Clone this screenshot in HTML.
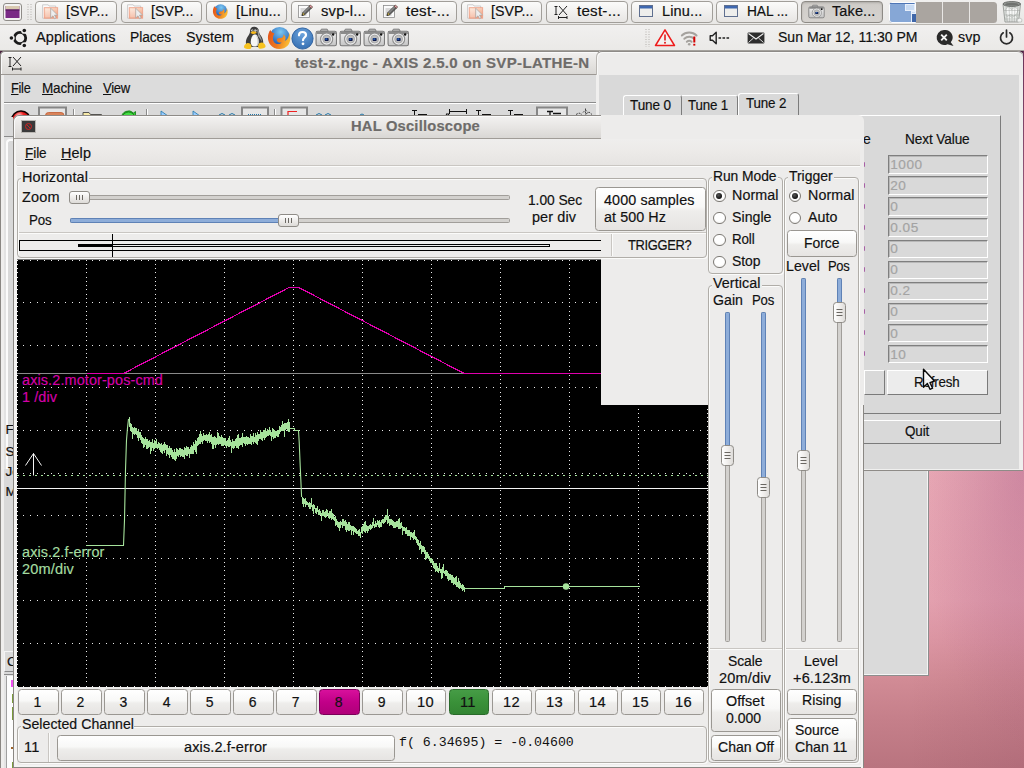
<!DOCTYPE html>
<html><head><meta charset="utf-8"><title>HAL Oscilloscope</title>
<style>
html,body{margin:0;padding:0}html{width:1024px;height:768px;overflow:hidden}
body{width:1024px;height:768px;position:relative;overflow:hidden;background:#c98a98;font-family:"Liberation Sans",sans-serif}
.a{position:absolute;box-sizing:border-box}
.t{position:absolute;white-space:pre;display:block;transform-origin:0 50%;-webkit-text-stroke:0.18px currentColor}
.t u{text-decoration:underline;text-underline-offset:1.2px;text-decoration-thickness:1px}
svg{position:absolute;overflow:visible}
.btn{border:1px solid #9a9792;border-radius:3.5px;background:linear-gradient(#ffffff 0%,#f8f8f7 45%,#eeedeb 55%,#e6e4e2 100%)}
.frame{border:1px solid #b0ada8;border-radius:4px;box-shadow:inset 1px 1px 0 #fbfbfa,1px 1px 0 #fbfbfa}
.radio{border:1px solid #7d7a75;border-radius:50%;background:radial-gradient(circle at 50% 35%,#ffffff 55%,#e2e0dd 100%)}
.tb{border:1px solid #a19e99;border-radius:4px;background:linear-gradient(#fbfbfa,#e7e5e3)}
.ent{border:1px solid;border-color:#7f7f7f #ffffff #ffffff #7f7f7f;background:#d9d9d9;box-shadow:inset 1px 1px 0 #b8b8b8}
</style></head><body>
<div class="a" style="left:0px;top:50px;width:1024px;height:718px;background:#c98a98"></div>
<div class="a" style="left:860px;top:464px;width:164px;height:304px;background:radial-gradient(ellipse 105px 280px at 100% 0%,rgba(150,60,125,.22) 0%,rgba(150,60,125,.10) 50%,rgba(150,60,125,0) 100%),linear-gradient(90deg,rgba(120,50,80,0) 30%,rgba(120,50,80,.11) 100%),linear-gradient(180deg,rgb(235,172,184) 0%,rgb(234,170,182) 4%,rgb(229,162,176) 45%,rgb(221,151,164) 58%,rgb(209,139,149) 71%,rgb(197,127,138) 84%,rgb(185,116,127) 100%)"></div>
<div class="a" style="left:0px;top:50px;width:1024px;height:6px;background:#4a2340"></div>
<div class="a" style="left:862px;top:465px;width:65.5px;height:209.5px;background:#dadada;border-right:1.5px solid #f4f4f4;border-bottom:1.5px solid #f4f4f4;box-shadow:1px 1px 0 #8d8d8d"></div>
<div class="a" style="left:0px;top:51px;width:600px;height:717px;background:#d9d9d9;border-radius:5px 0 0 0"></div>
<div class="a" style="left:0px;top:51px;width:599px;height:24px;background:linear-gradient(#f1f0ef,#e4e2df 60%,#dad8d5);border-radius:5px 0 0 0;border-top:1px solid #8e8b87;border-left:1px solid #8e8b87;border-bottom:1px solid #9c9893;box-shadow:inset 1px 1px 0 #fafafa"></div>
<span class="t" style="left:294.50px;top:56.00px;font:14px/14px 'Liberation Sans',sans-serif;font-weight:bold;letter-spacing:0.291px;transform:scaleX(1.0749);color:#6e6c6a;">test-z.ngc - AXIS 2.5.0 on SVP-LATHE-N</span>
<div class="a" style="left:0px;top:56px;width:1px;height:712px;background:#8a8783"></div>
<div class="a" style="left:1px;top:75px;width:3.5px;height:693px;background:#efeeed"></div>
<div class="a" style="left:4px;top:75px;width:593px;height:28px;background:#dcdcdc;border-bottom:1px solid #8c8c8c;box-shadow:0 1px 0 #fff"></div>
<span class="t" style="left:10.50px;top:81.00px;font:14px/14px 'Liberation Sans',sans-serif;letter-spacing:-0.268px;transform:scaleX(0.9074);color:#111;"><u>F</u>ile</span>
<span class="t" style="left:41.50px;top:81.00px;font:14px/14px 'Liberation Sans',sans-serif;letter-spacing:-0.146px;transform:scaleX(0.9634);color:#111;"><u>M</u>achine</span>
<span class="t" style="left:102.50px;top:81.00px;font:14px/14px 'Liberation Sans',sans-serif;letter-spacing:-0.271px;transform:scaleX(0.9307);color:#111;"><u>V</u>iew</span>
<svg style="left:8px;top:55px" width="16" height="16" viewBox="0 0 16 16"><g stroke="#222" stroke-width="1" fill="none"><path d="M0.5 2.5h3M2 2.5v9M0.5 11.5h3"/><path d="M5 2l8 9M13 2l-8 9"/><path d="M4.5 14h8.5M4.5 12.5v3M13 12.5v3"/></g></svg>
<div class="a" style="left:4px;top:104px;width:593px;height:13px;background:#d9d9d9"></div>
<svg style="left:0;top:103px" width="600" height="13" viewBox="0 103 600 13">
<defs><radialGradient id="rg" cx=".4" cy=".25" r=".7"><stop offset="0" stop-color="#ffd0d0"/><stop offset=".35" stop-color="#e22"/><stop offset="1" stop-color="#a00"/></radialGradient></defs><circle cx="21" cy="120.500" r="9.500" fill="url(#rg)" stroke="#100" stroke-width="1.600"/>
<rect x="39" y="107.500" width="27" height="20" fill="#e6e6e6" stroke="#868686" stroke-width="2"/>
<rect x="45.500" y="112.500" width="18.500" height="10" rx="3" fill="#d9835a" stroke="#c05a30" stroke-width=".8"/>
<path d="M73.500 109v8M146.500 109v8M274.500 109v8" stroke="#8a8a8a"/><path d="M74.500 109v8M147.500 109v8M275.500 109v8" stroke="#fff"/>
<path d="M83 112.500h6l1.500 2h11v4h-18.500z" fill="#f7eaa8" stroke="#444" stroke-width=".9"/>
<path d="M121.500 118a7 7 0 0 1 12-5l2-1.500v5h-5l1.500-1.500a4 4 0 0 0-7 3z" fill="#3c3" stroke="#171" stroke-width=".8"/><circle cx="128.500" cy="118.500" r="6.500" fill="#4d4" stroke="#171" stroke-width=".8"/>
<path d="M161 111l7 5h-7z M193 111l7 5h-7z" fill="#9cf" stroke="#27a" stroke-width=".8"/>
<path d="M219 115q3-3 6 0M229 115q3-3 6 0" stroke="#27a" fill="none"/>
<rect x="242" y="107.500" width="26" height="20" fill="#e6e6e6" stroke="#868686" stroke-width="2"/>
<path d="M248 114.500h14" stroke="#27a" stroke-dasharray="1 1"/>
<rect x="281.500" y="107.500" width="25.500" height="20" fill="#e6e6e6" stroke="#868686" stroke-width="2"/>
<path d="M288 116v-4.500h9" stroke="#e22" fill="none" stroke-width="1.2"/>
<path d="M316 115q3-3 6 0M325 115q3-3 6 0" stroke="#27a" fill="none"/>
<path d="M360 115q2-2 4 0" stroke="#27a" fill="none"/>
<g stroke="#111" fill="none"><path d="M412 110.500h5M414.500 110v7M418 114.500h9" /><path d="M449 111.500h18M449.500 109v5M466.500 109v5M446 114l1.500 2 1.500-2z"/><path d="M476 110.500h5M478.500 110v7M482 114.500h9"/><path d="M508 110.500h5M510.500 110v7M514 114.500h9"/></g>
<rect x="537" y="107.500" width="30" height="20" fill="#e6e6e6" stroke="#868686" stroke-width="2"/>
<path d="M547 111.500h6M550 111v6M553 113.500h8" stroke="#111" fill="none" stroke-width="1.300"/>
<path d="M576 114.500l3-1.500 3 1.500M586 114l3-2 3 2.500M585.500 108.500v7M583 112.500l2.500-2.500 2.500 2.500" stroke="#222" fill="none" stroke-width=".8" stroke-dasharray="2 1"/>
</svg>
<div class="a" style="left:4px;top:117px;width:9px;height:651px;background:#d9d9d9"></div>
<div class="a" style="left:4px;top:136px;width:9px;height:1px;background:#8c8c8c"></div>
<div class="a" style="left:4px;top:137px;width:9px;height:332px;background:#e2e2e2"></div>
<div class="a" style="left:6px;top:139px;width:7px;height:330px;background:#d9d9d9;border-left:2px solid #fbfbfb;border-top:2px solid #fbfbfb;border-radius:4px 0 0 0"></div>
<span class="t" style="left:5.50px;top:423.00px;font:13.5px/13.5px 'Liberation Sans',sans-serif;letter-spacing:0.000px;color:#111;">F</span>
<span class="t" style="left:5.50px;top:445.00px;font:13.5px/13.5px 'Liberation Sans',sans-serif;letter-spacing:0.000px;color:#111;">S</span>
<span class="t" style="left:5.50px;top:465.00px;font:13.5px/13.5px 'Liberation Sans',sans-serif;letter-spacing:0.000px;color:#111;">Jo</span>
<span class="t" style="left:5.50px;top:485.00px;font:13.5px/13.5px 'Liberation Sans',sans-serif;letter-spacing:0.000px;color:#111;">M</span>
<div class="a" style="left:4px;top:651px;width:10px;height:21px;background:#d9d9d9;border:1.500px solid;border-color:#f4f4f4 #8a8a8a #8a8a8a #f4f4f4"></div>
<span class="t" style="left:7.00px;top:655.00px;font:13.5px/13.5px 'Liberation Sans',sans-serif;letter-spacing:0.000px;color:#111;">C</span>
<div class="a" style="left:4px;top:673.5px;width:10px;height:1px;background:#8a8a8a"></div>
<div class="a" style="left:4px;top:674.5px;width:10px;height:94px;background:#e4e4e4"></div>
<div class="a" style="left:5.5px;top:676px;width:1px;height:92px;background:#a0a0a0"></div>
<div class="a" style="left:6.5px;top:676px;width:7px;height:92px;background:#fdfdfd"></div>
<div class="a" style="left:11px;top:680px;width:2px;height:6.5px;background:#f050f0"></div>
<div class="a" style="left:11.5px;top:694px;width:1.2px;height:9px;background:#7a9a3a"></div>
<div class="a" style="left:11.5px;top:707px;width:1.2px;height:13px;background:#7a9a3a"></div>
<div class="a" style="left:11px;top:747px;width:2px;height:1.5px;background:#a0642a"></div>
<div class="a" style="left:11.5px;top:762px;width:1.2px;height:6px;background:#7a9a3a"></div>
<div class="a" style="left:596px;top:51px;width:428px;height:420px;background:#d9d9d9;border-radius:6px 6px 0 0"></div>
<div class="a" style="left:596px;top:51px;width:427px;height:24px;background:#edeceb;border-radius:6px 6px 0 0;border-top:1px solid #8e8b87;border-left:1px solid #b9b6b2;box-shadow:inset 1px 1px 0 #f8f8f7"></div>
<div class="a" style="left:1022.5px;top:51px;width:1.5px;height:420px;background:linear-gradient(#6a3358,#96587a 35%,#bf7d99 70%,#d58fa6)"></div>
<div class="a" style="left:596px;top:75px;width:3px;height:395px;background:#f0efee"></div>
<div class="a" style="left:1019px;top:75px;width:3.5px;height:395px;background:#efeeed"></div>
<div class="a" style="left:596px;top:468.5px;width:427px;height:2px;background:#f0f0ef;border-bottom:1px solid #8e8b87"></div>
<div class="a" style="left:623px;top:95px;width:59px;height:20px;background:#d9d9d9;border:1px solid #fff;border-right:1px solid #7c7c7c;border-bottom:0;border-radius:3px 3px 0 0"></div>
<div class="a" style="left:682px;top:95px;width:56px;height:20px;background:#d9d9d9;border-top:1px solid #fff;border-right:1px solid #7c7c7c;border-radius:0 3px 0 0"></div>
<div class="a" style="left:738px;top:93px;width:60.5px;height:22.5px;background:#d9d9d9;border:1px solid #fff;border-right:1px solid #7c7c7c;border-bottom:0;border-radius:3px 3px 0 0"></div>
<span class="t" style="left:629.90px;top:98.00px;font:14px/14px 'Liberation Sans',sans-serif;letter-spacing:-0.121px;transform:scaleX(0.9683);color:#111;">Tune 0</span>
<span class="t" style="left:688.00px;top:98.00px;font:14px/14px 'Liberation Sans',sans-serif;letter-spacing:-0.179px;transform:scaleX(0.9525);color:#111;">Tune 1</span>
<span class="t" style="left:745.90px;top:96.00px;font:14px/14px 'Liberation Sans',sans-serif;letter-spacing:-0.167px;transform:scaleX(0.9557);color:#111;">Tune 2</span>
<div class="a" style="left:605px;top:114.5px;width:396px;height:299.5px;border:1px solid;border-color:#fff #7c7c7c #7c7c7c #fff"></div>
<span class="t" style="left:904.90px;top:132.00px;font:14px/14px 'Liberation Sans',sans-serif;letter-spacing:-0.100px;transform:scaleX(0.9722);color:#111;">Next Value</span>
<span class="t" style="left:863.00px;top:132.00px;font:14px/14px 'Liberation Sans',sans-serif;letter-spacing:0.000px;color:#111;">e</span>
<div class="a ent" style="left:888px;top:155.0px;width:100px;height:18.5px;"></div>
<span class="t" style="left:890.20px;top:158.00px;font:13.6px/13.6px 'Liberation Sans',sans-serif;letter-spacing:0.000px;color:#a3a3a3;letter-spacing:.55px;">1000</span>
<div class="a" style="left:864.3px;top:161.5px;width:1.2px;height:5px;background:#a860a6;border-radius:0 2px 2px 0"></div>
<div class="a ent" style="left:888px;top:176.0px;width:100px;height:18.5px;"></div>
<span class="t" style="left:890.20px;top:179.00px;font:13.6px/13.6px 'Liberation Sans',sans-serif;letter-spacing:0.000px;color:#a3a3a3;letter-spacing:.55px;">20</span>
<div class="a" style="left:864.3px;top:182.57px;width:1.2px;height:5px;background:#a860a6;border-radius:0 2px 2px 0"></div>
<div class="a ent" style="left:888px;top:197.0px;width:100px;height:18.5px;"></div>
<span class="t" style="left:890.20px;top:200.00px;font:13.6px/13.6px 'Liberation Sans',sans-serif;letter-spacing:0.000px;color:#a3a3a3;letter-spacing:.55px;">0</span>
<div class="a" style="left:864.3px;top:203.64px;width:1.2px;height:5px;background:#a860a6;border-radius:0 2px 2px 0"></div>
<div class="a ent" style="left:888px;top:218.0px;width:100px;height:18.5px;"></div>
<span class="t" style="left:890.20px;top:221.00px;font:13.6px/13.6px 'Liberation Sans',sans-serif;letter-spacing:0.000px;color:#a3a3a3;letter-spacing:.55px;">0.05</span>
<div class="a" style="left:864.3px;top:224.71px;width:1.2px;height:5px;background:#a860a6;border-radius:0 2px 2px 0"></div>
<div class="a ent" style="left:888px;top:239.5px;width:100px;height:18.5px;"></div>
<span class="t" style="left:890.20px;top:242.00px;font:13.6px/13.6px 'Liberation Sans',sans-serif;letter-spacing:0.000px;color:#a3a3a3;letter-spacing:.55px;">0</span>
<div class="a" style="left:864.3px;top:245.78px;width:1.2px;height:5px;background:#a860a6;border-radius:0 2px 2px 0"></div>
<div class="a ent" style="left:888px;top:260.5px;width:100px;height:18.5px;"></div>
<span class="t" style="left:890.20px;top:263.00px;font:13.6px/13.6px 'Liberation Sans',sans-serif;letter-spacing:0.000px;color:#a3a3a3;letter-spacing:.55px;">0</span>
<div class="a" style="left:864.3px;top:266.85px;width:1.2px;height:5px;background:#a860a6;border-radius:0 2px 2px 0"></div>
<div class="a ent" style="left:888px;top:281.5px;width:100px;height:18.5px;"></div>
<span class="t" style="left:890.20px;top:284.00px;font:13.6px/13.6px 'Liberation Sans',sans-serif;letter-spacing:0.000px;color:#a3a3a3;letter-spacing:.55px;">0.2</span>
<div class="a" style="left:864.3px;top:287.92px;width:1.2px;height:5px;background:#a860a6;border-radius:0 2px 2px 0"></div>
<div class="a ent" style="left:888px;top:302.5px;width:100px;height:18.5px;"></div>
<span class="t" style="left:890.20px;top:305.00px;font:13.6px/13.6px 'Liberation Sans',sans-serif;letter-spacing:0.000px;color:#a3a3a3;letter-spacing:.55px;">0</span>
<div class="a" style="left:864.3px;top:308.99px;width:1.2px;height:5px;background:#a860a6;border-radius:0 2px 2px 0"></div>
<div class="a ent" style="left:888px;top:323.5px;width:100px;height:18.5px;"></div>
<span class="t" style="left:890.20px;top:327.00px;font:13.6px/13.6px 'Liberation Sans',sans-serif;letter-spacing:0.000px;color:#a3a3a3;letter-spacing:.55px;">0</span>
<div class="a" style="left:864.3px;top:330.06px;width:1.2px;height:5px;background:#a860a6;border-radius:0 2px 2px 0"></div>
<div class="a ent" style="left:888px;top:344.5px;width:100px;height:18.5px;"></div>
<span class="t" style="left:890.20px;top:348.00px;font:13.6px/13.6px 'Liberation Sans',sans-serif;letter-spacing:0.000px;color:#a3a3a3;letter-spacing:.55px;">10</span>
<div class="a" style="left:864.3px;top:351.13px;width:1.2px;height:5px;background:#a860a6;border-radius:0 2px 2px 0"></div>
<div class="a" style="left:864px;top:370px;width:21px;height:25px;background:#d9d9d9;border:1.500px solid;border-color:#fff #7a7a7a #7a7a7a #fff"></div>
<div class="a" style="left:887px;top:370px;width:101px;height:25px;background:#ececec;border:1.500px solid;border-color:#fff #7a7a7a #7a7a7a #fff"></div>
<span class="t" style="left:914.00px;top:375.00px;font:14px/14px 'Liberation Sans',sans-serif;letter-spacing:-0.176px;transform:scaleX(0.9521);color:#111;">Refresh</span>
<div class="a" style="left:862px;top:419.5px;width:138.5px;height:24px;background:#d9d9d9;border:1.500px solid;border-color:#fff #7a7a7a #7a7a7a #fff"></div>
<span class="t" style="left:904.90px;top:424.00px;font:14px/14px 'Liberation Sans',sans-serif;letter-spacing:-0.129px;transform:scaleX(0.9619);color:#111;">Quit</span>
<div class="a" style="left:13px;top:115px;width:851px;height:653px;background:#edeceb;border-radius:6px 6px 0 0"></div>
<div class="a" style="left:13px;top:121px;width:1px;height:647px;background:#8a8783"></div>
<div class="a" style="left:14px;top:140px;width:2.5px;height:628px;background:#f5f4f3"></div>
<div class="a" style="left:863px;top:405px;width:1px;height:363px;background:#8a8783"></div>
<div class="a" style="left:14px;top:764.5px;width:849px;height:2.2px;background:#f4f4f3"></div>
<div class="a" style="left:13px;top:766.7px;width:851px;height:1.3px;background:#8a8783"></div>
<div class="a" style="left:860.5px;top:405px;width:2.5px;height:363px;background:#f4f3f2"></div>
<div class="a" style="left:13px;top:115px;width:588px;height:24px;background:linear-gradient(#f3f2f1,#e6e4e2 55%,#d9d7d4);border-radius:6px 0 0 0;border-top:1px solid #8e8b87;border-left:1px solid #8e8b87;border-bottom:1px solid #a09c97;box-shadow:inset 1px 1px 0 #fbfbfb"></div>
<span class="t" style="left:351.10px;top:119.00px;font:14px/14px 'Liberation Sans',sans-serif;font-weight:bold;letter-spacing:0.207px;transform:scaleX(1.0500);color:#6e6c6a;">HAL Oscilloscope</span>
<svg style="left:21px;top:120px" width="15" height="13" viewBox="0 0 15 13"><rect x=".5" y=".5" width="14" height="12" fill="#3a3a3a" stroke="#b9b6b2"/><circle cx="7.500" cy="6.500" r="3" fill="none" stroke="#c22" stroke-width="1"/><path d="M5.500 4.500l4 4" stroke="#c22"/></svg>
<div class="a" style="left:16px;top:139px;width:844px;height:26px;background:linear-gradient(#efeeed,#eceae8 50%,#e6e4e2)"></div>
<span class="t" style="left:25.00px;top:146.00px;font:14px/14px 'Liberation Sans',sans-serif;letter-spacing:-0.093px;transform:scaleX(0.9690);color:#111;"><u>F</u>ile</span>
<span class="t" style="left:61.00px;top:146.00px;font:14px/14px 'Liberation Sans',sans-serif;letter-spacing:0.106px;transform:scaleX(1.0268);color:#111;"><u>H</u>elp</span>
<div class="a" style="left:17px;top:165px;width:843px;height:2px;border-top:1px solid #c9c6c2;border-bottom:1px solid #fbfbfa"></div>
<div class="a frame" style="left:17px;top:178px;width:690px;height:80px;"></div>
<div class="a" style="left:20.5px;top:170px;width:68.5px;height:14px;background:#edeceb"></div>
<span class="t" style="left:21.80px;top:170.00px;font:14px/14px 'Liberation Sans',sans-serif;letter-spacing:0.104px;transform:scaleX(1.0301);color:#111;">Horizontal</span>
<span class="t" style="left:21.50px;top:190.00px;font:14px/14px 'Liberation Sans',sans-serif;letter-spacing:0.159px;transform:scaleX(1.0323);color:#111;">Zoom</span>
<span class="t" style="left:28.80px;top:213.00px;font:14px/14px 'Liberation Sans',sans-serif;letter-spacing:-0.201px;transform:scaleX(0.9523);color:#111;">Pos</span>
<div class="a" style="left:69.5px;top:194.5px;width:440px;height:5px;background:#d3d1ce;border:1px solid #a19e9a;border-radius:1.5px"></div>
<div class="a" style="left:69px;top:191.2px;width:20.5px;height:12.5px;border:1px solid #8f8c87;border-radius:3px;background:linear-gradient(#ffffff,#ebe9e7 60%,#dddbd8)"></div>
<svg style="left:69px;top:191.2px" width="21" height="13"><path d="M7.500 4v5M10.500 4v5M13.500 4v5" stroke="#6a6762"/></svg>
<div class="a" style="left:69.5px;top:217.5px;width:440px;height:5px;background:#d3d1ce;border:1px solid #a19e9a;border-radius:1.5px"></div>
<div class="a" style="left:69.5px;top:217.5px;width:215px;height:5px;background:#8eadd9;border:1px solid #5f82b6;border-radius:1.5px 0 0 1.5px"></div>
<div class="a" style="left:278px;top:214px;width:20.5px;height:12.5px;border:1px solid #8f8c87;border-radius:3px;background:linear-gradient(#ffffff,#ebe9e7 60%,#dddbd8)"></div>
<svg style="left:278px;top:214px" width="21" height="13"><path d="M7.500 4v5M10.500 4v5M13.500 4v5" stroke="#6a6762"/></svg>
<span class="t" style="left:527.50px;top:193.00px;font:14px/14px 'Liberation Sans',sans-serif;letter-spacing:-0.055px;transform:scaleX(0.9850);color:#111;">1.00 Sec</span>
<span class="t" style="left:531.50px;top:210.00px;font:14px/14px 'Liberation Sans',sans-serif;letter-spacing:0.099px;transform:scaleX(1.0301);color:#111;">per div</span>
<div class="a btn" style="left:595px;top:187px;width:110.5px;height:44px;"></div>
<span class="t" style="left:603.90px;top:193.00px;font:14px/14px 'Liberation Sans',sans-serif;letter-spacing:0.097px;transform:scaleX(1.0245);color:#111;">4000 samples</span>
<span class="t" style="left:603.90px;top:210.00px;font:14px/14px 'Liberation Sans',sans-serif;letter-spacing:0.081px;transform:scaleX(1.0222);color:#111;">at 500 Hz</span>
<div class="a" style="left:18.5px;top:232px;width:687px;height:2px;border-top:1px solid #c9c6c2;border-bottom:1px solid #fbfbfa"></div>
<div class="a" style="left:611px;top:234px;width:2px;height:22px;border-left:1px solid #c9c6c2;border-right:1px solid #fbfbfa"></div>
<span class="t" style="left:628.00px;top:238.00px;font:14px/14px 'Liberation Sans',sans-serif;letter-spacing:-0.362px;transform:scaleX(0.9218);color:#111;">TRIGGER?</span>
<svg style="left:0;top:0" width="1024" height="768" shape-rendering="crispEdges">
<path d="M601 240.500H19.500V250.500H601" fill="none" stroke="#000"/>
<path d="M112 244.500H549.500V246.500H112" fill="none" stroke="#000"/>
<rect x="78" y="244" width="34.500" height="3" fill="#000"/>
<path d="M112.500 234V257" stroke="#000"/>
</svg>
<svg style="left:0;top:0" width="1024" height="768" viewBox="0 0 1024 768">
<rect x="17.0" y="259.5" width="691.0" height="427.5" fill="#000"/>
<path d="M17 260.5h1M17 264.5h1M17 268.5h1M17 272.5h1M17 277.5h1M17 281.5h1M17 285.5h1M17 289.5h1M17 294.5h1M17 298.5h1M17 302.5h1M17 306.5h1M17 311.5h1M17 315.5h1M17 319.5h1M17 323.5h1M17 328.5h1M17 332.5h1M17 336.5h1M17 340.5h1M17 345.5h1M17 349.5h1M17 353.5h1M17 357.5h1M17 362.5h1M17 366.5h1M17 370.5h1M17 375.5h1M17 379.5h1M17 383.5h1M17 387.5h1M17 392.5h1M17 396.5h1M17 400.5h1M17 404.5h1M17 409.5h1M17 413.5h1M17 417.5h1M17 421.5h1M17 426.5h1M17 430.5h1M17 434.5h1M17 438.5h1M17 443.5h1M17 447.5h1M17 451.5h1M17 455.5h1M17 460.5h1M17 464.5h1M17 468.5h1M17 473.5h1M17 477.5h1M17 481.5h1M17 485.5h1M17 490.5h1M17 494.5h1M17 498.5h1M17 502.5h1M17 507.5h1M17 511.5h1M17 515.5h1M17 519.5h1M17 524.5h1M17 528.5h1M17 532.5h1M17 536.5h1M17 541.5h1M17 545.5h1M17 549.5h1M17 553.5h1M17 558.5h1M17 562.5h1M17 566.5h1M17 570.5h1M17 575.5h1M17 579.5h1M17 583.5h1M17 588.5h1M17 592.5h1M17 596.5h1M17 600.5h1M17 605.5h1M17 609.5h1M17 613.5h1M17 617.5h1M17 622.5h1M17 626.5h1M17 630.5h1M17 634.5h1M17 639.5h1M17 643.5h1M17 647.5h1M17 651.5h1M17 656.5h1M17 660.5h1M17 664.5h1M17 668.5h1M17 673.5h1M17 677.5h1M17 681.5h1M17 686.5h1M86 260.5h1M86 264.5h1M86 268.5h1M86 272.5h1M86 277.5h1M86 281.5h1M86 285.5h1M86 289.5h1M86 294.5h1M86 298.5h1M86 302.5h1M86 306.5h1M86 311.5h1M86 315.5h1M86 319.5h1M86 323.5h1M86 328.5h1M86 332.5h1M86 336.5h1M86 340.5h1M86 345.5h1M86 349.5h1M86 353.5h1M86 357.5h1M86 362.5h1M86 366.5h1M86 370.5h1M86 375.5h1M86 379.5h1M86 383.5h1M86 387.5h1M86 392.5h1M86 396.5h1M86 400.5h1M86 404.5h1M86 409.5h1M86 413.5h1M86 417.5h1M86 421.5h1M86 426.5h1M86 430.5h1M86 434.5h1M86 438.5h1M86 443.5h1M86 447.5h1M86 451.5h1M86 455.5h1M86 460.5h1M86 464.5h1M86 468.5h1M86 473.5h1M86 477.5h1M86 481.5h1M86 485.5h1M86 490.5h1M86 494.5h1M86 498.5h1M86 502.5h1M86 507.5h1M86 511.5h1M86 515.5h1M86 519.5h1M86 524.5h1M86 528.5h1M86 532.5h1M86 536.5h1M86 541.5h1M86 545.5h1M86 549.5h1M86 553.5h1M86 558.5h1M86 562.5h1M86 566.5h1M86 570.5h1M86 575.5h1M86 579.5h1M86 583.5h1M86 588.5h1M86 592.5h1M86 596.5h1M86 600.5h1M86 605.5h1M86 609.5h1M86 613.5h1M86 617.5h1M86 622.5h1M86 626.5h1M86 630.5h1M86 634.5h1M86 639.5h1M86 643.5h1M86 647.5h1M86 651.5h1M86 656.5h1M86 660.5h1M86 664.5h1M86 668.5h1M86 673.5h1M86 677.5h1M86 681.5h1M86 686.5h1M155 260.5h1M155 264.5h1M155 268.5h1M155 272.5h1M155 277.5h1M155 281.5h1M155 285.5h1M155 289.5h1M155 294.5h1M155 298.5h1M155 302.5h1M155 306.5h1M155 311.5h1M155 315.5h1M155 319.5h1M155 323.5h1M155 328.5h1M155 332.5h1M155 336.5h1M155 340.5h1M155 345.5h1M155 349.5h1M155 353.5h1M155 357.5h1M155 362.5h1M155 366.5h1M155 370.5h1M155 375.5h1M155 379.5h1M155 383.5h1M155 387.5h1M155 392.5h1M155 396.5h1M155 400.5h1M155 404.5h1M155 409.5h1M155 413.5h1M155 417.5h1M155 421.5h1M155 426.5h1M155 430.5h1M155 434.5h1M155 438.5h1M155 443.5h1M155 447.5h1M155 451.5h1M155 455.5h1M155 460.5h1M155 464.5h1M155 468.5h1M155 473.5h1M155 477.5h1M155 481.5h1M155 485.5h1M155 490.5h1M155 494.5h1M155 498.5h1M155 502.5h1M155 507.5h1M155 511.5h1M155 515.5h1M155 519.5h1M155 524.5h1M155 528.5h1M155 532.5h1M155 536.5h1M155 541.5h1M155 545.5h1M155 549.5h1M155 553.5h1M155 558.5h1M155 562.5h1M155 566.5h1M155 570.5h1M155 575.5h1M155 579.5h1M155 583.5h1M155 588.5h1M155 592.5h1M155 596.5h1M155 600.5h1M155 605.5h1M155 609.5h1M155 613.5h1M155 617.5h1M155 622.5h1M155 626.5h1M155 630.5h1M155 634.5h1M155 639.5h1M155 643.5h1M155 647.5h1M155 651.5h1M155 656.5h1M155 660.5h1M155 664.5h1M155 668.5h1M155 673.5h1M155 677.5h1M155 681.5h1M155 686.5h1M224 260.5h1M224 264.5h1M224 268.5h1M224 272.5h1M224 277.5h1M224 281.5h1M224 285.5h1M224 289.5h1M224 294.5h1M224 298.5h1M224 302.5h1M224 306.5h1M224 311.5h1M224 315.5h1M224 319.5h1M224 323.5h1M224 328.5h1M224 332.5h1M224 336.5h1M224 340.5h1M224 345.5h1M224 349.5h1M224 353.5h1M224 357.5h1M224 362.5h1M224 366.5h1M224 370.5h1M224 375.5h1M224 379.5h1M224 383.5h1M224 387.5h1M224 392.5h1M224 396.5h1M224 400.5h1M224 404.5h1M224 409.5h1M224 413.5h1M224 417.5h1M224 421.5h1M224 426.5h1M224 430.5h1M224 434.5h1M224 438.5h1M224 443.5h1M224 447.5h1M224 451.5h1M224 455.5h1M224 460.5h1M224 464.5h1M224 468.5h1M224 473.5h1M224 477.5h1M224 481.5h1M224 485.5h1M224 490.5h1M224 494.5h1M224 498.5h1M224 502.5h1M224 507.5h1M224 511.5h1M224 515.5h1M224 519.5h1M224 524.5h1M224 528.5h1M224 532.5h1M224 536.5h1M224 541.5h1M224 545.5h1M224 549.5h1M224 553.5h1M224 558.5h1M224 562.5h1M224 566.5h1M224 570.5h1M224 575.5h1M224 579.5h1M224 583.5h1M224 588.5h1M224 592.5h1M224 596.5h1M224 600.5h1M224 605.5h1M224 609.5h1M224 613.5h1M224 617.5h1M224 622.5h1M224 626.5h1M224 630.5h1M224 634.5h1M224 639.5h1M224 643.5h1M224 647.5h1M224 651.5h1M224 656.5h1M224 660.5h1M224 664.5h1M224 668.5h1M224 673.5h1M224 677.5h1M224 681.5h1M224 686.5h1M293 260.5h1M293 264.5h1M293 268.5h1M293 272.5h1M293 277.5h1M293 281.5h1M293 285.5h1M293 289.5h1M293 294.5h1M293 298.5h1M293 302.5h1M293 306.5h1M293 311.5h1M293 315.5h1M293 319.5h1M293 323.5h1M293 328.5h1M293 332.5h1M293 336.5h1M293 340.5h1M293 345.5h1M293 349.5h1M293 353.5h1M293 357.5h1M293 362.5h1M293 366.5h1M293 370.5h1M293 375.5h1M293 379.5h1M293 383.5h1M293 387.5h1M293 392.5h1M293 396.5h1M293 400.5h1M293 404.5h1M293 409.5h1M293 413.5h1M293 417.5h1M293 421.5h1M293 426.5h1M293 430.5h1M293 434.5h1M293 438.5h1M293 443.5h1M293 447.5h1M293 451.5h1M293 455.5h1M293 460.5h1M293 464.5h1M293 468.5h1M293 473.5h1M293 477.5h1M293 481.5h1M293 485.5h1M293 490.5h1M293 494.5h1M293 498.5h1M293 502.5h1M293 507.5h1M293 511.5h1M293 515.5h1M293 519.5h1M293 524.5h1M293 528.5h1M293 532.5h1M293 536.5h1M293 541.5h1M293 545.5h1M293 549.5h1M293 553.5h1M293 558.5h1M293 562.5h1M293 566.5h1M293 570.5h1M293 575.5h1M293 579.5h1M293 583.5h1M293 588.5h1M293 592.5h1M293 596.5h1M293 600.5h1M293 605.5h1M293 609.5h1M293 613.5h1M293 617.5h1M293 622.5h1M293 626.5h1M293 630.5h1M293 634.5h1M293 639.5h1M293 643.5h1M293 647.5h1M293 651.5h1M293 656.5h1M293 660.5h1M293 664.5h1M293 668.5h1M293 673.5h1M293 677.5h1M293 681.5h1M293 686.5h1M362 260.5h1M362 264.5h1M362 268.5h1M362 272.5h1M362 277.5h1M362 281.5h1M362 285.5h1M362 289.5h1M362 294.5h1M362 298.5h1M362 302.5h1M362 306.5h1M362 311.5h1M362 315.5h1M362 319.5h1M362 323.5h1M362 328.5h1M362 332.5h1M362 336.5h1M362 340.5h1M362 345.5h1M362 349.5h1M362 353.5h1M362 357.5h1M362 362.5h1M362 366.5h1M362 370.5h1M362 375.5h1M362 379.5h1M362 383.5h1M362 387.5h1M362 392.5h1M362 396.5h1M362 400.5h1M362 404.5h1M362 409.5h1M362 413.5h1M362 417.5h1M362 421.5h1M362 426.5h1M362 430.5h1M362 434.5h1M362 438.5h1M362 443.5h1M362 447.5h1M362 451.5h1M362 455.5h1M362 460.5h1M362 464.5h1M362 468.5h1M362 473.5h1M362 477.5h1M362 481.5h1M362 485.5h1M362 490.5h1M362 494.5h1M362 498.5h1M362 502.5h1M362 507.5h1M362 511.5h1M362 515.5h1M362 519.5h1M362 524.5h1M362 528.5h1M362 532.5h1M362 536.5h1M362 541.5h1M362 545.5h1M362 549.5h1M362 553.5h1M362 558.5h1M362 562.5h1M362 566.5h1M362 570.5h1M362 575.5h1M362 579.5h1M362 583.5h1M362 588.5h1M362 592.5h1M362 596.5h1M362 600.5h1M362 605.5h1M362 609.5h1M362 613.5h1M362 617.5h1M362 622.5h1M362 626.5h1M362 630.5h1M362 634.5h1M362 639.5h1M362 643.5h1M362 647.5h1M362 651.5h1M362 656.5h1M362 660.5h1M362 664.5h1M362 668.5h1M362 673.5h1M362 677.5h1M362 681.5h1M362 686.5h1M431 260.5h1M431 264.5h1M431 268.5h1M431 272.5h1M431 277.5h1M431 281.5h1M431 285.5h1M431 289.5h1M431 294.5h1M431 298.5h1M431 302.5h1M431 306.5h1M431 311.5h1M431 315.5h1M431 319.5h1M431 323.5h1M431 328.5h1M431 332.5h1M431 336.5h1M431 340.5h1M431 345.5h1M431 349.5h1M431 353.5h1M431 357.5h1M431 362.5h1M431 366.5h1M431 370.5h1M431 375.5h1M431 379.5h1M431 383.5h1M431 387.5h1M431 392.5h1M431 396.5h1M431 400.5h1M431 404.5h1M431 409.5h1M431 413.5h1M431 417.5h1M431 421.5h1M431 426.5h1M431 430.5h1M431 434.5h1M431 438.5h1M431 443.5h1M431 447.5h1M431 451.5h1M431 455.5h1M431 460.5h1M431 464.5h1M431 468.5h1M431 473.5h1M431 477.5h1M431 481.5h1M431 485.5h1M431 490.5h1M431 494.5h1M431 498.5h1M431 502.5h1M431 507.5h1M431 511.5h1M431 515.5h1M431 519.5h1M431 524.5h1M431 528.5h1M431 532.5h1M431 536.5h1M431 541.5h1M431 545.5h1M431 549.5h1M431 553.5h1M431 558.5h1M431 562.5h1M431 566.5h1M431 570.5h1M431 575.5h1M431 579.5h1M431 583.5h1M431 588.5h1M431 592.5h1M431 596.5h1M431 600.5h1M431 605.5h1M431 609.5h1M431 613.5h1M431 617.5h1M431 622.5h1M431 626.5h1M431 630.5h1M431 634.5h1M431 639.5h1M431 643.5h1M431 647.5h1M431 651.5h1M431 656.5h1M431 660.5h1M431 664.5h1M431 668.5h1M431 673.5h1M431 677.5h1M431 681.5h1M431 686.5h1M500 260.5h1M500 264.5h1M500 268.5h1M500 272.5h1M500 277.5h1M500 281.5h1M500 285.5h1M500 289.5h1M500 294.5h1M500 298.5h1M500 302.5h1M500 306.5h1M500 311.5h1M500 315.5h1M500 319.5h1M500 323.5h1M500 328.5h1M500 332.5h1M500 336.5h1M500 340.5h1M500 345.5h1M500 349.5h1M500 353.5h1M500 357.5h1M500 362.5h1M500 366.5h1M500 370.5h1M500 375.5h1M500 379.5h1M500 383.5h1M500 387.5h1M500 392.5h1M500 396.5h1M500 400.5h1M500 404.5h1M500 409.5h1M500 413.5h1M500 417.5h1M500 421.5h1M500 426.5h1M500 430.5h1M500 434.5h1M500 438.5h1M500 443.5h1M500 447.5h1M500 451.5h1M500 455.5h1M500 460.5h1M500 464.5h1M500 468.5h1M500 473.5h1M500 477.5h1M500 481.5h1M500 485.5h1M500 490.5h1M500 494.5h1M500 498.5h1M500 502.5h1M500 507.5h1M500 511.5h1M500 515.5h1M500 519.5h1M500 524.5h1M500 528.5h1M500 532.5h1M500 536.5h1M500 541.5h1M500 545.5h1M500 549.5h1M500 553.5h1M500 558.5h1M500 562.5h1M500 566.5h1M500 570.5h1M500 575.5h1M500 579.5h1M500 583.5h1M500 588.5h1M500 592.5h1M500 596.5h1M500 600.5h1M500 605.5h1M500 609.5h1M500 613.5h1M500 617.5h1M500 622.5h1M500 626.5h1M500 630.5h1M500 634.5h1M500 639.5h1M500 643.5h1M500 647.5h1M500 651.5h1M500 656.5h1M500 660.5h1M500 664.5h1M500 668.5h1M500 673.5h1M500 677.5h1M500 681.5h1M500 686.5h1M569 260.5h1M569 264.5h1M569 268.5h1M569 272.5h1M569 277.5h1M569 281.5h1M569 285.5h1M569 289.5h1M569 294.5h1M569 298.5h1M569 302.5h1M569 306.5h1M569 311.5h1M569 315.5h1M569 319.5h1M569 323.5h1M569 328.5h1M569 332.5h1M569 336.5h1M569 340.5h1M569 345.5h1M569 349.5h1M569 353.5h1M569 357.5h1M569 362.5h1M569 366.5h1M569 370.5h1M569 375.5h1M569 379.5h1M569 383.5h1M569 387.5h1M569 392.5h1M569 396.5h1M569 400.5h1M569 404.5h1M569 409.5h1M569 413.5h1M569 417.5h1M569 421.5h1M569 426.5h1M569 430.5h1M569 434.5h1M569 438.5h1M569 443.5h1M569 447.5h1M569 451.5h1M569 455.5h1M569 460.5h1M569 464.5h1M569 468.5h1M569 473.5h1M569 477.5h1M569 481.5h1M569 485.5h1M569 490.5h1M569 494.5h1M569 498.5h1M569 502.5h1M569 507.5h1M569 511.5h1M569 515.5h1M569 519.5h1M569 524.5h1M569 528.5h1M569 532.5h1M569 536.5h1M569 541.5h1M569 545.5h1M569 549.5h1M569 553.5h1M569 558.5h1M569 562.5h1M569 566.5h1M569 570.5h1M569 575.5h1M569 579.5h1M569 583.5h1M569 588.5h1M569 592.5h1M569 596.5h1M569 600.5h1M569 605.5h1M569 609.5h1M569 613.5h1M569 617.5h1M569 622.5h1M569 626.5h1M569 630.5h1M569 634.5h1M569 639.5h1M569 643.5h1M569 647.5h1M569 651.5h1M569 656.5h1M569 660.5h1M569 664.5h1M569 668.5h1M569 673.5h1M569 677.5h1M569 681.5h1M569 686.5h1M638 260.5h1M638 264.5h1M638 268.5h1M638 272.5h1M638 277.5h1M638 281.5h1M638 285.5h1M638 289.5h1M638 294.5h1M638 298.5h1M638 302.5h1M638 306.5h1M638 311.5h1M638 315.5h1M638 319.5h1M638 323.5h1M638 328.5h1M638 332.5h1M638 336.5h1M638 340.5h1M638 345.5h1M638 349.5h1M638 353.5h1M638 357.5h1M638 362.5h1M638 366.5h1M638 370.5h1M638 375.5h1M638 379.5h1M638 383.5h1M638 387.5h1M638 392.5h1M638 396.5h1M638 400.5h1M638 404.5h1M638 409.5h1M638 413.5h1M638 417.5h1M638 421.5h1M638 426.5h1M638 430.5h1M638 434.5h1M638 438.5h1M638 443.5h1M638 447.5h1M638 451.5h1M638 455.5h1M638 460.5h1M638 464.5h1M638 468.5h1M638 473.5h1M638 477.5h1M638 481.5h1M638 485.5h1M638 490.5h1M638 494.5h1M638 498.5h1M638 502.5h1M638 507.5h1M638 511.5h1M638 515.5h1M638 519.5h1M638 524.5h1M638 528.5h1M638 532.5h1M638 536.5h1M638 541.5h1M638 545.5h1M638 549.5h1M638 553.5h1M638 558.5h1M638 562.5h1M638 566.5h1M638 570.5h1M638 575.5h1M638 579.5h1M638 583.5h1M638 588.5h1M638 592.5h1M638 596.5h1M638 600.5h1M638 605.5h1M638 609.5h1M638 613.5h1M638 617.5h1M638 622.5h1M638 626.5h1M638 630.5h1M638 634.5h1M638 639.5h1M638 643.5h1M638 647.5h1M638 651.5h1M638 656.5h1M638 660.5h1M638 664.5h1M638 668.5h1M638 673.5h1M638 677.5h1M638 681.5h1M638 686.5h1M707 260.5h1M707 264.5h1M707 268.5h1M707 272.5h1M707 277.5h1M707 281.5h1M707 285.5h1M707 289.5h1M707 294.5h1M707 298.5h1M707 302.5h1M707 306.5h1M707 311.5h1M707 315.5h1M707 319.5h1M707 323.5h1M707 328.5h1M707 332.5h1M707 336.5h1M707 340.5h1M707 345.5h1M707 349.5h1M707 353.5h1M707 357.5h1M707 362.5h1M707 366.5h1M707 370.5h1M707 375.5h1M707 379.5h1M707 383.5h1M707 387.5h1M707 392.5h1M707 396.5h1M707 400.5h1M707 404.5h1M707 409.5h1M707 413.5h1M707 417.5h1M707 421.5h1M707 426.5h1M707 430.5h1M707 434.5h1M707 438.5h1M707 443.5h1M707 447.5h1M707 451.5h1M707 455.5h1M707 460.5h1M707 464.5h1M707 468.5h1M707 473.5h1M707 477.5h1M707 481.5h1M707 485.5h1M707 490.5h1M707 494.5h1M707 498.5h1M707 502.5h1M707 507.5h1M707 511.5h1M707 515.5h1M707 519.5h1M707 524.5h1M707 528.5h1M707 532.5h1M707 536.5h1M707 541.5h1M707 545.5h1M707 549.5h1M707 553.5h1M707 558.5h1M707 562.5h1M707 566.5h1M707 570.5h1M707 575.5h1M707 579.5h1M707 583.5h1M707 588.5h1M707 592.5h1M707 596.5h1M707 600.5h1M707 605.5h1M707 609.5h1M707 613.5h1M707 617.5h1M707 622.5h1M707 626.5h1M707 630.5h1M707 634.5h1M707 639.5h1M707 643.5h1M707 647.5h1M707 651.5h1M707 656.5h1M707 660.5h1M707 664.5h1M707 668.5h1M707 673.5h1M707 677.5h1M707 681.5h1M707 686.5h1M17 260.5h1M23 260.5h1M30 260.5h1M37 260.5h1M44 260.5h1M51 260.5h1M58 260.5h1M65 260.5h1M72 260.5h1M79 260.5h1M86 260.5h1M92 260.5h1M99 260.5h1M106 260.5h1M113 260.5h1M120 260.5h1M127 260.5h1M134 260.5h1M141 260.5h1M148 260.5h1M155 260.5h1M161 260.5h1M168 260.5h1M175 260.5h1M182 260.5h1M189 260.5h1M196 260.5h1M203 260.5h1M210 260.5h1M217 260.5h1M224 260.5h1M230 260.5h1M237 260.5h1M244 260.5h1M251 260.5h1M258 260.5h1M265 260.5h1M272 260.5h1M279 260.5h1M286 260.5h1M293 260.5h1M299 260.5h1M306 260.5h1M313 260.5h1M320 260.5h1M327 260.5h1M334 260.5h1M341 260.5h1M348 260.5h1M355 260.5h1M362 260.5h1M368 260.5h1M375 260.5h1M382 260.5h1M389 260.5h1M396 260.5h1M403 260.5h1M410 260.5h1M417 260.5h1M424 260.5h1M431 260.5h1M437 260.5h1M444 260.5h1M451 260.5h1M458 260.5h1M465 260.5h1M472 260.5h1M479 260.5h1M486 260.5h1M493 260.5h1M500 260.5h1M506 260.5h1M513 260.5h1M520 260.5h1M527 260.5h1M534 260.5h1M541 260.5h1M548 260.5h1M555 260.5h1M562 260.5h1M569 260.5h1M575 260.5h1M582 260.5h1M589 260.5h1M596 260.5h1M603 260.5h1M610 260.5h1M617 260.5h1M624 260.5h1M631 260.5h1M638 260.5h1M644 260.5h1M651 260.5h1M658 260.5h1M665 260.5h1M672 260.5h1M679 260.5h1M686 260.5h1M693 260.5h1M700 260.5h1M707 260.5h1M17 302.5h1M23 302.5h1M30 302.5h1M37 302.5h1M44 302.5h1M51 302.5h1M58 302.5h1M65 302.5h1M72 302.5h1M79 302.5h1M86 302.5h1M92 302.5h1M99 302.5h1M106 302.5h1M113 302.5h1M120 302.5h1M127 302.5h1M134 302.5h1M141 302.5h1M148 302.5h1M155 302.5h1M161 302.5h1M168 302.5h1M175 302.5h1M182 302.5h1M189 302.5h1M196 302.5h1M203 302.5h1M210 302.5h1M217 302.5h1M224 302.5h1M230 302.5h1M237 302.5h1M244 302.5h1M251 302.5h1M258 302.5h1M265 302.5h1M272 302.5h1M279 302.5h1M286 302.5h1M293 302.5h1M299 302.5h1M306 302.5h1M313 302.5h1M320 302.5h1M327 302.5h1M334 302.5h1M341 302.5h1M348 302.5h1M355 302.5h1M362 302.5h1M368 302.5h1M375 302.5h1M382 302.5h1M389 302.5h1M396 302.5h1M403 302.5h1M410 302.5h1M417 302.5h1M424 302.5h1M431 302.5h1M437 302.5h1M444 302.5h1M451 302.5h1M458 302.5h1M465 302.5h1M472 302.5h1M479 302.5h1M486 302.5h1M493 302.5h1M500 302.5h1M506 302.5h1M513 302.5h1M520 302.5h1M527 302.5h1M534 302.5h1M541 302.5h1M548 302.5h1M555 302.5h1M562 302.5h1M569 302.5h1M575 302.5h1M582 302.5h1M589 302.5h1M596 302.5h1M603 302.5h1M610 302.5h1M617 302.5h1M624 302.5h1M631 302.5h1M638 302.5h1M644 302.5h1M651 302.5h1M658 302.5h1M665 302.5h1M672 302.5h1M679 302.5h1M686 302.5h1M693 302.5h1M700 302.5h1M707 302.5h1M17 345.5h1M23 345.5h1M30 345.5h1M37 345.5h1M44 345.5h1M51 345.5h1M58 345.5h1M65 345.5h1M72 345.5h1M79 345.5h1M86 345.5h1M92 345.5h1M99 345.5h1M106 345.5h1M113 345.5h1M120 345.5h1M127 345.5h1M134 345.5h1M141 345.5h1M148 345.5h1M155 345.5h1M161 345.5h1M168 345.5h1M175 345.5h1M182 345.5h1M189 345.5h1M196 345.5h1M203 345.5h1M210 345.5h1M217 345.5h1M224 345.5h1M230 345.5h1M237 345.5h1M244 345.5h1M251 345.5h1M258 345.5h1M265 345.5h1M272 345.5h1M279 345.5h1M286 345.5h1M293 345.5h1M299 345.5h1M306 345.5h1M313 345.5h1M320 345.5h1M327 345.5h1M334 345.5h1M341 345.5h1M348 345.5h1M355 345.5h1M362 345.5h1M368 345.5h1M375 345.5h1M382 345.5h1M389 345.5h1M396 345.5h1M403 345.5h1M410 345.5h1M417 345.5h1M424 345.5h1M431 345.5h1M437 345.5h1M444 345.5h1M451 345.5h1M458 345.5h1M465 345.5h1M472 345.5h1M479 345.5h1M486 345.5h1M493 345.5h1M500 345.5h1M506 345.5h1M513 345.5h1M520 345.5h1M527 345.5h1M534 345.5h1M541 345.5h1M548 345.5h1M555 345.5h1M562 345.5h1M569 345.5h1M575 345.5h1M582 345.5h1M589 345.5h1M596 345.5h1M603 345.5h1M610 345.5h1M617 345.5h1M624 345.5h1M631 345.5h1M638 345.5h1M644 345.5h1M651 345.5h1M658 345.5h1M665 345.5h1M672 345.5h1M679 345.5h1M686 345.5h1M693 345.5h1M700 345.5h1M707 345.5h1M17 387.5h1M23 387.5h1M30 387.5h1M37 387.5h1M44 387.5h1M51 387.5h1M58 387.5h1M65 387.5h1M72 387.5h1M79 387.5h1M86 387.5h1M92 387.5h1M99 387.5h1M106 387.5h1M113 387.5h1M120 387.5h1M127 387.5h1M134 387.5h1M141 387.5h1M148 387.5h1M155 387.5h1M161 387.5h1M168 387.5h1M175 387.5h1M182 387.5h1M189 387.5h1M196 387.5h1M203 387.5h1M210 387.5h1M217 387.5h1M224 387.5h1M230 387.5h1M237 387.5h1M244 387.5h1M251 387.5h1M258 387.5h1M265 387.5h1M272 387.5h1M279 387.5h1M286 387.5h1M293 387.5h1M299 387.5h1M306 387.5h1M313 387.5h1M320 387.5h1M327 387.5h1M334 387.5h1M341 387.5h1M348 387.5h1M355 387.5h1M362 387.5h1M368 387.5h1M375 387.5h1M382 387.5h1M389 387.5h1M396 387.5h1M403 387.5h1M410 387.5h1M417 387.5h1M424 387.5h1M431 387.5h1M437 387.5h1M444 387.5h1M451 387.5h1M458 387.5h1M465 387.5h1M472 387.5h1M479 387.5h1M486 387.5h1M493 387.5h1M500 387.5h1M506 387.5h1M513 387.5h1M520 387.5h1M527 387.5h1M534 387.5h1M541 387.5h1M548 387.5h1M555 387.5h1M562 387.5h1M569 387.5h1M575 387.5h1M582 387.5h1M589 387.5h1M596 387.5h1M603 387.5h1M610 387.5h1M617 387.5h1M624 387.5h1M631 387.5h1M638 387.5h1M644 387.5h1M651 387.5h1M658 387.5h1M665 387.5h1M672 387.5h1M679 387.5h1M686 387.5h1M693 387.5h1M700 387.5h1M707 387.5h1M17 430.5h1M23 430.5h1M30 430.5h1M37 430.5h1M44 430.5h1M51 430.5h1M58 430.5h1M65 430.5h1M72 430.5h1M79 430.5h1M86 430.5h1M92 430.5h1M99 430.5h1M106 430.5h1M113 430.5h1M120 430.5h1M127 430.5h1M134 430.5h1M141 430.5h1M148 430.5h1M155 430.5h1M161 430.5h1M168 430.5h1M175 430.5h1M182 430.5h1M189 430.5h1M196 430.5h1M203 430.5h1M210 430.5h1M217 430.5h1M224 430.5h1M230 430.5h1M237 430.5h1M244 430.5h1M251 430.5h1M258 430.5h1M265 430.5h1M272 430.5h1M279 430.5h1M286 430.5h1M293 430.5h1M299 430.5h1M306 430.5h1M313 430.5h1M320 430.5h1M327 430.5h1M334 430.5h1M341 430.5h1M348 430.5h1M355 430.5h1M362 430.5h1M368 430.5h1M375 430.5h1M382 430.5h1M389 430.5h1M396 430.5h1M403 430.5h1M410 430.5h1M417 430.5h1M424 430.5h1M431 430.5h1M437 430.5h1M444 430.5h1M451 430.5h1M458 430.5h1M465 430.5h1M472 430.5h1M479 430.5h1M486 430.5h1M493 430.5h1M500 430.5h1M506 430.5h1M513 430.5h1M520 430.5h1M527 430.5h1M534 430.5h1M541 430.5h1M548 430.5h1M555 430.5h1M562 430.5h1M569 430.5h1M575 430.5h1M582 430.5h1M589 430.5h1M596 430.5h1M603 430.5h1M610 430.5h1M617 430.5h1M624 430.5h1M631 430.5h1M638 430.5h1M644 430.5h1M651 430.5h1M658 430.5h1M665 430.5h1M672 430.5h1M679 430.5h1M686 430.5h1M693 430.5h1M700 430.5h1M707 430.5h1M17 473.5h1M23 473.5h1M30 473.5h1M37 473.5h1M44 473.5h1M51 473.5h1M58 473.5h1M65 473.5h1M72 473.5h1M79 473.5h1M86 473.5h1M92 473.5h1M99 473.5h1M106 473.5h1M113 473.5h1M120 473.5h1M127 473.5h1M134 473.5h1M141 473.5h1M148 473.5h1M155 473.5h1M161 473.5h1M168 473.5h1M175 473.5h1M182 473.5h1M189 473.5h1M196 473.5h1M203 473.5h1M210 473.5h1M217 473.5h1M224 473.5h1M230 473.5h1M237 473.5h1M244 473.5h1M251 473.5h1M258 473.5h1M265 473.5h1M272 473.5h1M279 473.5h1M286 473.5h1M293 473.5h1M299 473.5h1M306 473.5h1M313 473.5h1M320 473.5h1M327 473.5h1M334 473.5h1M341 473.5h1M348 473.5h1M355 473.5h1M362 473.5h1M368 473.5h1M375 473.5h1M382 473.5h1M389 473.5h1M396 473.5h1M403 473.5h1M410 473.5h1M417 473.5h1M424 473.5h1M431 473.5h1M437 473.5h1M444 473.5h1M451 473.5h1M458 473.5h1M465 473.5h1M472 473.5h1M479 473.5h1M486 473.5h1M493 473.5h1M500 473.5h1M506 473.5h1M513 473.5h1M520 473.5h1M527 473.5h1M534 473.5h1M541 473.5h1M548 473.5h1M555 473.5h1M562 473.5h1M569 473.5h1M575 473.5h1M582 473.5h1M589 473.5h1M596 473.5h1M603 473.5h1M610 473.5h1M617 473.5h1M624 473.5h1M631 473.5h1M638 473.5h1M644 473.5h1M651 473.5h1M658 473.5h1M665 473.5h1M672 473.5h1M679 473.5h1M686 473.5h1M693 473.5h1M700 473.5h1M707 473.5h1M17 515.5h1M23 515.5h1M30 515.5h1M37 515.5h1M44 515.5h1M51 515.5h1M58 515.5h1M65 515.5h1M72 515.5h1M79 515.5h1M86 515.5h1M92 515.5h1M99 515.5h1M106 515.5h1M113 515.5h1M120 515.5h1M127 515.5h1M134 515.5h1M141 515.5h1M148 515.5h1M155 515.5h1M161 515.5h1M168 515.5h1M175 515.5h1M182 515.5h1M189 515.5h1M196 515.5h1M203 515.5h1M210 515.5h1M217 515.5h1M224 515.5h1M230 515.5h1M237 515.5h1M244 515.5h1M251 515.5h1M258 515.5h1M265 515.5h1M272 515.5h1M279 515.5h1M286 515.5h1M293 515.5h1M299 515.5h1M306 515.5h1M313 515.5h1M320 515.5h1M327 515.5h1M334 515.5h1M341 515.5h1M348 515.5h1M355 515.5h1M362 515.5h1M368 515.5h1M375 515.5h1M382 515.5h1M389 515.5h1M396 515.5h1M403 515.5h1M410 515.5h1M417 515.5h1M424 515.5h1M431 515.5h1M437 515.5h1M444 515.5h1M451 515.5h1M458 515.5h1M465 515.5h1M472 515.5h1M479 515.5h1M486 515.5h1M493 515.5h1M500 515.5h1M506 515.5h1M513 515.5h1M520 515.5h1M527 515.5h1M534 515.5h1M541 515.5h1M548 515.5h1M555 515.5h1M562 515.5h1M569 515.5h1M575 515.5h1M582 515.5h1M589 515.5h1M596 515.5h1M603 515.5h1M610 515.5h1M617 515.5h1M624 515.5h1M631 515.5h1M638 515.5h1M644 515.5h1M651 515.5h1M658 515.5h1M665 515.5h1M672 515.5h1M679 515.5h1M686 515.5h1M693 515.5h1M700 515.5h1M707 515.5h1M17 558.5h1M23 558.5h1M30 558.5h1M37 558.5h1M44 558.5h1M51 558.5h1M58 558.5h1M65 558.5h1M72 558.5h1M79 558.5h1M86 558.5h1M92 558.5h1M99 558.5h1M106 558.5h1M113 558.5h1M120 558.5h1M127 558.5h1M134 558.5h1M141 558.5h1M148 558.5h1M155 558.5h1M161 558.5h1M168 558.5h1M175 558.5h1M182 558.5h1M189 558.5h1M196 558.5h1M203 558.5h1M210 558.5h1M217 558.5h1M224 558.5h1M230 558.5h1M237 558.5h1M244 558.5h1M251 558.5h1M258 558.5h1M265 558.5h1M272 558.5h1M279 558.5h1M286 558.5h1M293 558.5h1M299 558.5h1M306 558.5h1M313 558.5h1M320 558.5h1M327 558.5h1M334 558.5h1M341 558.5h1M348 558.5h1M355 558.5h1M362 558.5h1M368 558.5h1M375 558.5h1M382 558.5h1M389 558.5h1M396 558.5h1M403 558.5h1M410 558.5h1M417 558.5h1M424 558.5h1M431 558.5h1M437 558.5h1M444 558.5h1M451 558.5h1M458 558.5h1M465 558.5h1M472 558.5h1M479 558.5h1M486 558.5h1M493 558.5h1M500 558.5h1M506 558.5h1M513 558.5h1M520 558.5h1M527 558.5h1M534 558.5h1M541 558.5h1M548 558.5h1M555 558.5h1M562 558.5h1M569 558.5h1M575 558.5h1M582 558.5h1M589 558.5h1M596 558.5h1M603 558.5h1M610 558.5h1M617 558.5h1M624 558.5h1M631 558.5h1M638 558.5h1M644 558.5h1M651 558.5h1M658 558.5h1M665 558.5h1M672 558.5h1M679 558.5h1M686 558.5h1M693 558.5h1M700 558.5h1M707 558.5h1M17 600.5h1M23 600.5h1M30 600.5h1M37 600.5h1M44 600.5h1M51 600.5h1M58 600.5h1M65 600.5h1M72 600.5h1M79 600.5h1M86 600.5h1M92 600.5h1M99 600.5h1M106 600.5h1M113 600.5h1M120 600.5h1M127 600.5h1M134 600.5h1M141 600.5h1M148 600.5h1M155 600.5h1M161 600.5h1M168 600.5h1M175 600.5h1M182 600.5h1M189 600.5h1M196 600.5h1M203 600.5h1M210 600.5h1M217 600.5h1M224 600.5h1M230 600.5h1M237 600.5h1M244 600.5h1M251 600.5h1M258 600.5h1M265 600.5h1M272 600.5h1M279 600.5h1M286 600.5h1M293 600.5h1M299 600.5h1M306 600.5h1M313 600.5h1M320 600.5h1M327 600.5h1M334 600.5h1M341 600.5h1M348 600.5h1M355 600.5h1M362 600.5h1M368 600.5h1M375 600.5h1M382 600.5h1M389 600.5h1M396 600.5h1M403 600.5h1M410 600.5h1M417 600.5h1M424 600.5h1M431 600.5h1M437 600.5h1M444 600.5h1M451 600.5h1M458 600.5h1M465 600.5h1M472 600.5h1M479 600.5h1M486 600.5h1M493 600.5h1M500 600.5h1M506 600.5h1M513 600.5h1M520 600.5h1M527 600.5h1M534 600.5h1M541 600.5h1M548 600.5h1M555 600.5h1M562 600.5h1M569 600.5h1M575 600.5h1M582 600.5h1M589 600.5h1M596 600.5h1M603 600.5h1M610 600.5h1M617 600.5h1M624 600.5h1M631 600.5h1M638 600.5h1M644 600.5h1M651 600.5h1M658 600.5h1M665 600.5h1M672 600.5h1M679 600.5h1M686 600.5h1M693 600.5h1M700 600.5h1M707 600.5h1M17 643.5h1M23 643.5h1M30 643.5h1M37 643.5h1M44 643.5h1M51 643.5h1M58 643.5h1M65 643.5h1M72 643.5h1M79 643.5h1M86 643.5h1M92 643.5h1M99 643.5h1M106 643.5h1M113 643.5h1M120 643.5h1M127 643.5h1M134 643.5h1M141 643.5h1M148 643.5h1M155 643.5h1M161 643.5h1M168 643.5h1M175 643.5h1M182 643.5h1M189 643.5h1M196 643.5h1M203 643.5h1M210 643.5h1M217 643.5h1M224 643.5h1M230 643.5h1M237 643.5h1M244 643.5h1M251 643.5h1M258 643.5h1M265 643.5h1M272 643.5h1M279 643.5h1M286 643.5h1M293 643.5h1M299 643.5h1M306 643.5h1M313 643.5h1M320 643.5h1M327 643.5h1M334 643.5h1M341 643.5h1M348 643.5h1M355 643.5h1M362 643.5h1M368 643.5h1M375 643.5h1M382 643.5h1M389 643.5h1M396 643.5h1M403 643.5h1M410 643.5h1M417 643.5h1M424 643.5h1M431 643.5h1M437 643.5h1M444 643.5h1M451 643.5h1M458 643.5h1M465 643.5h1M472 643.5h1M479 643.5h1M486 643.5h1M493 643.5h1M500 643.5h1M506 643.5h1M513 643.5h1M520 643.5h1M527 643.5h1M534 643.5h1M541 643.5h1M548 643.5h1M555 643.5h1M562 643.5h1M569 643.5h1M575 643.5h1M582 643.5h1M589 643.5h1M596 643.5h1M603 643.5h1M610 643.5h1M617 643.5h1M624 643.5h1M631 643.5h1M638 643.5h1M644 643.5h1M651 643.5h1M658 643.5h1M665 643.5h1M672 643.5h1M679 643.5h1M686 643.5h1M693 643.5h1M700 643.5h1M707 643.5h1M17 686.5h1M23 686.5h1M30 686.5h1M37 686.5h1M44 686.5h1M51 686.5h1M58 686.5h1M65 686.5h1M72 686.5h1M79 686.5h1M86 686.5h1M92 686.5h1M99 686.5h1M106 686.5h1M113 686.5h1M120 686.5h1M127 686.5h1M134 686.5h1M141 686.5h1M148 686.5h1M155 686.5h1M161 686.5h1M168 686.5h1M175 686.5h1M182 686.5h1M189 686.5h1M196 686.5h1M203 686.5h1M210 686.5h1M217 686.5h1M224 686.5h1M230 686.5h1M237 686.5h1M244 686.5h1M251 686.5h1M258 686.5h1M265 686.5h1M272 686.5h1M279 686.5h1M286 686.5h1M293 686.5h1M299 686.5h1M306 686.5h1M313 686.5h1M320 686.5h1M327 686.5h1M334 686.5h1M341 686.5h1M348 686.5h1M355 686.5h1M362 686.5h1M368 686.5h1M375 686.5h1M382 686.5h1M389 686.5h1M396 686.5h1M403 686.5h1M410 686.5h1M417 686.5h1M424 686.5h1M431 686.5h1M437 686.5h1M444 686.5h1M451 686.5h1M458 686.5h1M465 686.5h1M472 686.5h1M479 686.5h1M486 686.5h1M493 686.5h1M500 686.5h1M506 686.5h1M513 686.5h1M520 686.5h1M527 686.5h1M534 686.5h1M541 686.5h1M548 686.5h1M555 686.5h1M562 686.5h1M569 686.5h1M575 686.5h1M582 686.5h1M589 686.5h1M596 686.5h1M603 686.5h1M610 686.5h1M617 686.5h1M624 686.5h1M631 686.5h1M638 686.5h1M644 686.5h1M651 686.5h1M658 686.5h1M665 686.5h1M672 686.5h1M679 686.5h1M686 686.5h1M693 686.5h1M700 686.5h1M707 686.5h1" stroke="#ececec" stroke-width="1" shape-rendering="crispEdges"/>
<path d="M17 373.500H601" stroke="#8a8a8a" stroke-width="1" shape-rendering="crispEdges"/>
<path d="M87 373.500H123.400L289 287.500H298.700L464.200 373.500H601" fill="none" stroke="#e000ae" stroke-width="1.25" shape-rendering="crispEdges"/>
<path d="M17 488.500H708" stroke="#f4f4f4" stroke-width="1" shape-rendering="crispEdges"/>
<path d="M17 475.500H708" stroke="#a6e39c" stroke-width="1" stroke-dasharray="2 4" shape-rendering="crispEdges"/>
<path d="M33.500 475.500V453.500M25.500 465.500L33.500 453.500L41.500 465.500" fill="none" stroke="#f4f4f4" stroke-width="1"/>
<path d="M86 545.500H123.500L124.500 520L125.500 470L126.500 440L127.500 428L128.500 419" fill="none" stroke="#a6e39c" stroke-width="1.1"/>
<path d="M129.5 417V427M130.5 423V431M131.5 424V432M132.5 427V439M133.5 428V434M134.5 427V435M135.5 428V434M136.5 428V435M137.5 431V438M138.5 429V441M139.5 432V438M140.5 432V440M141.5 435V443M142.5 437V444M143.5 438V448M144.5 439V447M145.5 437V445M146.5 439V449M147.5 439V449M148.5 441V448M149.5 440V447M150.5 442V454M151.5 442V451M152.5 439V448M153.5 443V451M154.5 440V449M155.5 441V448M156.5 439V448M157.5 444V449M158.5 442V448M159.5 443V450M160.5 444V452M161.5 443V453M162.5 445V454M163.5 444V451M164.5 442V453M165.5 444V450M166.5 445V456M167.5 445V454M168.5 448V455M169.5 446V458M170.5 448V455M171.5 448V457M172.5 450V459M173.5 452V459M174.5 449V460M175.5 452V461M176.5 448V459M177.5 449V456M178.5 450V457M179.5 448V455M180.5 448V457M181.5 449V456M182.5 449V457M183.5 450V457M184.5 447V459M185.5 448V455M186.5 446V456M187.5 447V456M188.5 447V454M189.5 449V458M190.5 447V454M191.5 445V454M192.5 446V454M193.5 442V454M194.5 444V450M195.5 440V452M196.5 441V454M197.5 438V446M198.5 437V445M199.5 434V444M200.5 431V444M201.5 434V442M202.5 436V444M203.5 433V441M204.5 435V440M205.5 435V441M206.5 434V441M207.5 435V443M208.5 434V441M209.5 432V443M210.5 435V442M211.5 434V444M212.5 437V449M213.5 437V449M214.5 436V445M215.5 437V448M216.5 438V445M217.5 432V444M218.5 433V445M219.5 436V444M220.5 437V444M221.5 435V446M222.5 437V446M223.5 438V446M224.5 438V445M225.5 438V446M226.5 441V448M227.5 440V446M228.5 438V447M229.5 436V447M230.5 440V446M231.5 442V453M232.5 439V448M233.5 441V449M234.5 441V448M235.5 439V446M236.5 438V448M237.5 435V448M238.5 434V449M239.5 438V446M240.5 438V445M241.5 437V445M242.5 433V447M243.5 437V443M244.5 437V444M245.5 437V446M246.5 436V444M247.5 437V445M248.5 437V444M249.5 438V444M250.5 434V444M251.5 436V445M252.5 436V442M253.5 433V444M254.5 437V442M255.5 433V443M256.5 435V444M257.5 432V445M258.5 434V441M259.5 434V439M260.5 430V439M261.5 432V440M262.5 432V441M263.5 430V438M264.5 430V440M265.5 428V438M266.5 431V437M267.5 429V436M268.5 430V436M269.5 427V435M270.5 430V436M271.5 432V441M272.5 428V437M273.5 429V439M274.5 430V438M275.5 431V438M276.5 431V436M277.5 430V437M278.5 430V437M279.5 426V434M280.5 427V432M281.5 425V431M282.5 421V431M283.5 424V431M284.5 423V437M285.5 423V430M286.5 423V429M287.5 422V431M288.5 419V432M289.5 422V432M302.5 497V504M303.5 498V507M304.5 499V504M305.5 498V507M306.5 501V505M307.5 502V505M308.5 503V507M309.5 502V509M310.5 503V509M311.5 498V507M312.5 505V511M313.5 504V514M314.5 505V509M315.5 508V513M316.5 508V514M317.5 506V512M318.5 510V515M319.5 509V515M320.5 511V515M321.5 513V521M322.5 510V516M323.5 510V516M324.5 512V517M325.5 511V518M326.5 509V517M327.5 510V515M328.5 513V518M329.5 511V519M330.5 511V518M331.5 509V520M332.5 513V519M333.5 514V520M334.5 517V521M335.5 516V526M336.5 519V525M337.5 521V527M338.5 522V528M339.5 522V531M340.5 521V528M341.5 522V525M342.5 519V528M343.5 519V526M344.5 521V526M345.5 520V530M346.5 522V532M347.5 524V530M348.5 522V531M349.5 522V531M350.5 525V530M351.5 526V535M352.5 526V531M353.5 526V535M354.5 527V532M355.5 528V533M356.5 529V534M357.5 531V534M358.5 530V536M359.5 529V536M360.5 532V538M361.5 527V533M362.5 526V534M363.5 524V531M364.5 522V532M365.5 521V533M366.5 525V531M367.5 526V533M368.5 526V531M369.5 525V529M370.5 524V530M371.5 525V529M372.5 522V528M373.5 518V526M374.5 524V528M375.5 521V527M376.5 523V527M377.5 520V525M378.5 521V527M379.5 520V528M380.5 522V527M381.5 520V527M382.5 519V523M383.5 519V524M384.5 517V523M385.5 515V522M386.5 515V520M387.5 509V524M388.5 516V523M389.5 519V526M390.5 519V525M391.5 519V525M392.5 520V526M393.5 521V528M394.5 522V528M395.5 522V528M396.5 521V527M397.5 521V527M398.5 519V529M399.5 518V529M400.5 523V529M401.5 522V528M402.5 526V535M403.5 527V531M404.5 527V531M405.5 528V534M406.5 527V534M407.5 530V536M408.5 530V536M409.5 530V536M410.5 532V540M411.5 532V537M412.5 533V538M413.5 532V540M414.5 530V539M415.5 536V540M416.5 537V543M417.5 539V545M418.5 540V546M419.5 543V550M420.5 541V549M421.5 545V554M422.5 546V552M423.5 546V552M424.5 547V554M425.5 550V560M426.5 552V559M427.5 552V558M428.5 554V559M429.5 556V561M430.5 558V563M431.5 558V563M432.5 559V565M433.5 561V568M434.5 563V569M435.5 563V572M436.5 563V571M437.5 566V572M438.5 568V573M439.5 563V571M440.5 569V573M441.5 569V579M442.5 567V578M443.5 564V573M444.5 571V574M445.5 570V576M446.5 570V576M447.5 571V579M448.5 573V581M449.5 574V580M450.5 574V580M451.5 575V583M452.5 575V583M453.5 577V585M454.5 578V584M455.5 577V585M456.5 576V587M457.5 582V587M458.5 578V588M459.5 581V589M460.5 583V588M461.5 585V589M462.5 584V591M463.5 585V590M464.5 587V592" fill="none" stroke="#a6e39c" stroke-width="1" shape-rendering="crispEdges"/>
<path d="M129.500 418V426M290 428.500H294.500V430.500H298.500L299.200 442L300.300 468L301.200 488L301.600 497" fill="none" stroke="#a6e39c" stroke-width="1.1"/>
<path d="M464 588.500H504.500V586.500H640" fill="none" stroke="#a6e39c" stroke-width="1" shape-rendering="crispEdges"/>
<circle cx="566" cy="586.500" r="3.2" fill="#a6e39c"/>
<rect x="601" y="259" width="107" height="146" fill="#edeceb"/>
</svg>
<span class="t" style="left:22.00px;top:373.00px;font:14px/14px 'Liberation Sans',sans-serif;letter-spacing:0.112px;transform:scaleX(1.0304);color:#d400a8;">axis.2.motor-pos-cmd</span>
<span class="t" style="left:22.00px;top:390.00px;font:14px/14px 'Liberation Sans',sans-serif;letter-spacing:0.090px;transform:scaleX(1.0294);color:#d400a8;">1 /div</span>
<span class="t" style="left:22.00px;top:545.00px;font:14px/14px 'Liberation Sans',sans-serif;letter-spacing:0.098px;transform:scaleX(1.0319);color:#a4dca0;">axis.2.f-error</span>
<span class="t" style="left:22.00px;top:562.00px;font:14px/14px 'Liberation Sans',sans-serif;letter-spacing:0.149px;transform:scaleX(1.0387);color:#a4dca0;">20m/div</span>
<div class="a btn" style="left:18.0px;top:688.5px;width:40.5px;height:26.5px;"></div>
<span class="t" style="left:33.56px;top:695.00px;font:14px/14px 'Liberation Sans',sans-serif;letter-spacing:0.000px;color:#111;">1</span>
<div class="a btn" style="left:61.0px;top:688.5px;width:40.5px;height:26.5px;"></div>
<span class="t" style="left:76.59px;top:695.00px;font:14px/14px 'Liberation Sans',sans-serif;letter-spacing:0.000px;color:#111;">2</span>
<div class="a btn" style="left:104.0px;top:688.5px;width:40.5px;height:26.5px;"></div>
<span class="t" style="left:119.62px;top:695.00px;font:14px/14px 'Liberation Sans',sans-serif;letter-spacing:0.000px;color:#111;">3</span>
<div class="a btn" style="left:147.0px;top:688.5px;width:40.5px;height:26.5px;"></div>
<span class="t" style="left:162.65px;top:695.00px;font:14px/14px 'Liberation Sans',sans-serif;letter-spacing:0.000px;color:#111;">4</span>
<div class="a btn" style="left:190.0px;top:688.5px;width:40.5px;height:26.5px;"></div>
<span class="t" style="left:205.68px;top:695.00px;font:14px/14px 'Liberation Sans',sans-serif;letter-spacing:0.000px;color:#111;">5</span>
<div class="a btn" style="left:233.0px;top:688.5px;width:40.5px;height:26.5px;"></div>
<span class="t" style="left:248.71px;top:695.00px;font:14px/14px 'Liberation Sans',sans-serif;letter-spacing:0.000px;color:#111;">6</span>
<div class="a btn" style="left:276.0px;top:688.5px;width:40.5px;height:26.5px;"></div>
<span class="t" style="left:291.74px;top:695.00px;font:14px/14px 'Liberation Sans',sans-serif;letter-spacing:0.000px;color:#111;">7</span>
<div class="a btn" style="left:319.0px;top:688.5px;width:40.5px;height:26.5px;background:linear-gradient(#d8109c,#c10088 50%,#b00079);border-color:#7a0058;"></div>
<span class="t" style="left:334.77px;top:695.00px;font:14px/14px 'Liberation Sans',sans-serif;letter-spacing:0.000px;color:#111;">8</span>
<div class="a btn" style="left:362.0px;top:688.5px;width:40.5px;height:26.5px;"></div>
<span class="t" style="left:377.80px;top:695.00px;font:14px/14px 'Liberation Sans',sans-serif;letter-spacing:0.000px;color:#111;">9</span>
<div class="a btn" style="left:405.5px;top:688.5px;width:40.5px;height:26.5px;"></div>
<span class="t" style="left:416.63px;top:695.00px;font:14px/14px 'Liberation Sans',sans-serif;letter-spacing:0.210px;transform:scaleX(1.0488);color:#111;">10</span>
<div class="a btn" style="left:448.5px;top:688.5px;width:40.5px;height:26.5px;background:linear-gradient(#469c46,#3a9139 50%,#338533);border-color:#2a6a2a;"></div>
<span class="t" style="left:460.18px;top:695.00px;font:14px/14px 'Liberation Sans',sans-serif;letter-spacing:0.210px;transform:scaleX(1.0522);color:#111;">11</span>
<div class="a btn" style="left:491.5px;top:688.5px;width:40.5px;height:26.5px;"></div>
<span class="t" style="left:502.69px;top:695.00px;font:14px/14px 'Liberation Sans',sans-serif;letter-spacing:0.210px;transform:scaleX(1.0488);color:#111;">12</span>
<div class="a btn" style="left:534.5px;top:688.5px;width:40.5px;height:26.5px;"></div>
<span class="t" style="left:545.72px;top:695.00px;font:14px/14px 'Liberation Sans',sans-serif;letter-spacing:0.210px;transform:scaleX(1.0488);color:#111;">13</span>
<div class="a btn" style="left:577.5px;top:688.5px;width:40.5px;height:26.5px;"></div>
<span class="t" style="left:588.75px;top:695.00px;font:14px/14px 'Liberation Sans',sans-serif;letter-spacing:0.210px;transform:scaleX(1.0488);color:#111;">14</span>
<div class="a btn" style="left:620.5px;top:688.5px;width:40.5px;height:26.5px;"></div>
<span class="t" style="left:631.78px;top:695.00px;font:14px/14px 'Liberation Sans',sans-serif;letter-spacing:0.210px;transform:scaleX(1.0488);color:#111;">15</span>
<div class="a btn" style="left:663.5px;top:688.5px;width:40.5px;height:26.5px;"></div>
<span class="t" style="left:674.81px;top:695.00px;font:14px/14px 'Liberation Sans',sans-serif;letter-spacing:0.210px;transform:scaleX(1.0488);color:#111;">16</span>
<div class="a frame" style="left:17px;top:726px;width:690px;height:37px;"></div>
<div class="a" style="left:20.5px;top:718px;width:113.5px;height:14px;background:#edeceb"></div>
<span class="t" style="left:21.80px;top:717.00px;font:14px/14px 'Liberation Sans',sans-serif;letter-spacing:0.032px;transform:scaleX(1.0086);color:#111;">Selected Channel</span>
<span class="t" style="left:24.10px;top:740.00px;font:14px/14px 'Liberation Sans',sans-serif;letter-spacing:0.169px;transform:scaleX(1.0422);color:#111;">11</span>
<div class="a" style="left:48px;top:733px;width:2px;height:29px;border-left:1px solid #c9c6c2;border-right:1px solid #fbfbfa"></div>
<div class="a btn" style="left:57px;top:734.5px;width:338px;height:26.5px;"></div>
<span class="t" style="left:184.00px;top:740.00px;font:14px/14px 'Liberation Sans',sans-serif;letter-spacing:0.111px;transform:scaleX(1.0359);color:#111;">axis.2.f-error</span>
<span class="t" style="left:399.20px;top:736.00px;font:13px/13px 'Liberation Mono',monospace;-webkit-text-stroke:0;letter-spacing:0.000px;transform:scaleX(1.0185);color:#111;">f( 6.34695) = -0.04600</span>
<div class="a frame" style="left:708px;top:177px;width:75px;height:97px;"></div>
<div class="a" style="left:711.5px;top:169px;width:66px;height:14px;background:#edeceb"></div>
<span class="t" style="left:713.00px;top:169.00px;font:14px/14px 'Liberation Sans',sans-serif;letter-spacing:-0.048px;transform:scaleX(0.9889);color:#111;">Run Mode</span>
<div class="a radio" style="left:713px;top:189.6px;width:12.5px;height:12.5px;"></div>
<div class="a" style="left:716.25px;top:192.85px;width:6px;height:6px;border-radius:50%;background:radial-gradient(circle at 40% 35%,#555,#111 70%)"></div>
<span class="t" style="left:732.20px;top:188.00px;font:14px/14px 'Liberation Sans',sans-serif;letter-spacing:0.081px;transform:scaleX(1.0197);color:#111;">Normal</span>
<div class="a radio" style="left:713px;top:211.63px;width:12.5px;height:12.5px;"></div>
<span class="t" style="left:732.20px;top:210.00px;font:14px/14px 'Liberation Sans',sans-serif;letter-spacing:0.034px;transform:scaleX(1.0097);color:#111;">Single</span>
<div class="a radio" style="left:713px;top:233.66px;width:12.5px;height:12.5px;"></div>
<span class="t" style="left:732.20px;top:232.00px;font:14px/14px 'Liberation Sans',sans-serif;letter-spacing:-0.142px;transform:scaleX(0.9553);color:#111;">Roll</span>
<div class="a radio" style="left:713px;top:255.69px;width:12.5px;height:12.5px;"></div>
<span class="t" style="left:732.20px;top:254.00px;font:14px/14px 'Liberation Sans',sans-serif;letter-spacing:-0.026px;transform:scaleX(0.9932);color:#111;">Stop</span>
<div class="a frame" style="left:784px;top:177px;width:75px;height:586px;"></div>
<div class="a" style="left:787.5px;top:169px;width:46.5px;height:14px;background:#edeceb"></div>
<span class="t" style="left:789.30px;top:169.00px;font:14px/14px 'Liberation Sans',sans-serif;letter-spacing:-0.016px;transform:scaleX(0.9951);color:#111;">Trigger</span>
<div class="a radio" style="left:788.8px;top:189.6px;width:12.5px;height:12.5px;"></div>
<div class="a" style="left:792.05px;top:192.85px;width:6px;height:6px;border-radius:50%;background:radial-gradient(circle at 40% 35%,#555,#111 70%)"></div>
<span class="t" style="left:807.90px;top:188.00px;font:14px/14px 'Liberation Sans',sans-serif;letter-spacing:0.081px;transform:scaleX(1.0197);color:#111;">Normal</span>
<div class="a radio" style="left:788.8px;top:211.63px;width:12.5px;height:12.5px;"></div>
<span class="t" style="left:807.90px;top:210.00px;font:14px/14px 'Liberation Sans',sans-serif;letter-spacing:0.061px;transform:scaleX(1.0157);color:#111;">Auto</span>
<div class="a btn" style="left:787px;top:230px;width:70px;height:27px;"></div>
<span class="t" style="left:804.00px;top:236.00px;font:14px/14px 'Liberation Sans',sans-serif;letter-spacing:-0.020px;transform:scaleX(0.9948);color:#111;">Force</span>
<span class="t" style="left:785.90px;top:259.00px;font:14px/14px 'Liberation Sans',sans-serif;letter-spacing:0.037px;transform:scaleX(1.0102);color:#111;">Level</span>
<span class="t" style="left:828.20px;top:259.00px;font:14px/14px 'Liberation Sans',sans-serif;letter-spacing:-0.306px;transform:scaleX(0.9265);color:#111;">Pos</span>
<div class="a frame" style="left:708px;top:285px;width:75px;height:478px;"></div>
<div class="a" style="left:711.5px;top:277px;width:50px;height:14px;background:#edeceb"></div>
<span class="t" style="left:713.00px;top:276.00px;font:14px/14px 'Liberation Sans',sans-serif;letter-spacing:0.069px;transform:scaleX(1.0222);color:#111;">Vertical</span>
<span class="t" style="left:713.00px;top:293.00px;font:14px/14px 'Liberation Sans',sans-serif;letter-spacing:0.037px;transform:scaleX(1.0093);color:#111;">Gain</span>
<span class="t" style="left:752.00px;top:293.00px;font:14px/14px 'Liberation Sans',sans-serif;letter-spacing:-0.248px;transform:scaleX(0.9409);color:#111;">Pos</span>
<div class="a" style="left:725px;top:312px;width:5px;height:330px;background:#d3d1ce;border:1px solid #a19e9a;border-radius:1.5px"></div>
<div class="a" style="left:725px;top:312px;width:5px;height:137px;background:#8eadd9;border:1px solid #5f82b6;border-radius:1.5px 1.5px 0 0"></div>
<div class="a" style="left:721px;top:445px;width:13px;height:21px;border:1px solid #8f8c87;border-radius:3.5px;background:linear-gradient(90deg,#ffffff,#f0eeec 55%,#dedcd9)"></div>
<svg style="left:721px;top:445px" width="13" height="21"><path d="M3.500 7.500h6M3.500 10.500h6M3.500 13.500h6" stroke="#6a6762"/></svg>
<div class="a" style="left:761px;top:312px;width:5px;height:330px;background:#d3d1ce;border:1px solid #a19e9a;border-radius:1.5px"></div>
<div class="a" style="left:761px;top:312px;width:5px;height:169px;background:#8eadd9;border:1px solid #5f82b6;border-radius:1.5px 1.5px 0 0"></div>
<div class="a" style="left:757px;top:477px;width:13px;height:21px;border:1px solid #8f8c87;border-radius:3.5px;background:linear-gradient(90deg,#ffffff,#f0eeec 55%,#dedcd9)"></div>
<svg style="left:757px;top:477px" width="13" height="21"><path d="M3.500 7.500h6M3.500 10.500h6M3.500 13.500h6" stroke="#6a6762"/></svg>
<div class="a" style="left:801px;top:278px;width:5px;height:364px;background:#d3d1ce;border:1px solid #a19e9a;border-radius:1.5px"></div>
<div class="a" style="left:801px;top:278px;width:5px;height:176px;background:#8eadd9;border:1px solid #5f82b6;border-radius:1.5px 1.5px 0 0"></div>
<div class="a" style="left:797px;top:450px;width:13px;height:21px;border:1px solid #8f8c87;border-radius:3.5px;background:linear-gradient(90deg,#ffffff,#f0eeec 55%,#dedcd9)"></div>
<svg style="left:797px;top:450px" width="13" height="21"><path d="M3.500 7.500h6M3.500 10.500h6M3.500 13.500h6" stroke="#6a6762"/></svg>
<div class="a" style="left:837px;top:278px;width:5px;height:364px;background:#d3d1ce;border:1px solid #a19e9a;border-radius:1.5px"></div>
<div class="a" style="left:837px;top:278px;width:5px;height:28px;background:#8eadd9;border:1px solid #5f82b6;border-radius:1.5px 1.5px 0 0"></div>
<div class="a" style="left:833px;top:302px;width:13px;height:21px;border:1px solid #8f8c87;border-radius:3.5px;background:linear-gradient(90deg,#ffffff,#f0eeec 55%,#dedcd9)"></div>
<svg style="left:833px;top:302px" width="13" height="21"><path d="M3.500 7.500h6M3.500 10.500h6M3.500 13.500h6" stroke="#6a6762"/></svg>
<div class="a" style="left:709.5px;top:648px;width:72.5px;height:2px;border-top:1px solid #c9c6c2;border-bottom:1px solid #fbfbfa"></div>
<div class="a" style="left:785.5px;top:648px;width:72.5px;height:2px;border-top:1px solid #c9c6c2;border-bottom:1px solid #fbfbfa"></div>
<span class="t" style="left:727.80px;top:654.00px;font:14px/14px 'Liberation Sans',sans-serif;letter-spacing:-0.037px;transform:scaleX(0.9903);color:#111;">Scale</span>
<span class="t" style="left:719.00px;top:671.00px;font:14px/14px 'Liberation Sans',sans-serif;letter-spacing:0.149px;transform:scaleX(1.0387);color:#111;">20m/div</span>
<span class="t" style="left:804.00px;top:654.00px;font:14px/14px 'Liberation Sans',sans-serif;letter-spacing:0.037px;transform:scaleX(1.0102);color:#111;">Level</span>
<span class="t" style="left:792.50px;top:671.00px;font:14px/14px 'Liberation Sans',sans-serif;letter-spacing:0.156px;transform:scaleX(1.0363);color:#111;">+6.123m</span>
<div class="a btn" style="left:711px;top:688.5px;width:69.5px;height:43px;"></div>
<span class="t" style="left:725.80px;top:694.00px;font:14px/14px 'Liberation Sans',sans-serif;letter-spacing:0.082px;transform:scaleX(1.0244);color:#111;">Offset</span>
<span class="t" style="left:726.00px;top:711.00px;font:14px/14px 'Liberation Sans',sans-serif;letter-spacing:-0.002px;color:#111;">0.000</span>
<div class="a btn" style="left:711px;top:734.5px;width:69.5px;height:26.5px;"></div>
<span class="t" style="left:717.50px;top:740.00px;font:14px/14px 'Liberation Sans',sans-serif;letter-spacing:0.010px;transform:scaleX(1.0026);color:#111;">Chan Off</span>
<div class="a btn" style="left:787px;top:688.5px;width:70px;height:26px;"></div>
<span class="t" style="left:801.80px;top:693.00px;font:14px/14px 'Liberation Sans',sans-serif;letter-spacing:0.035px;transform:scaleX(1.0099);color:#111;">Rising</span>
<div class="a btn" style="left:787px;top:717.5px;width:70px;height:43.5px;"></div>
<span class="t" style="left:794.50px;top:723.00px;font:14px/14px 'Liberation Sans',sans-serif;letter-spacing:-0.021px;transform:scaleX(0.9947);color:#111;">Source</span>
<span class="t" style="left:794.50px;top:740.00px;font:14px/14px 'Liberation Sans',sans-serif;letter-spacing:0.030px;transform:scaleX(1.0076);color:#111;">Chan 11</span>
<svg width="0" height="0" style="left:0;top:0"><defs><linearGradient id="camg" x1="0" y1="0" x2="0" y2="1"><stop offset="0" stop-color="#f2f2f2"/><stop offset="1" stop-color="#c4c4c4"/></linearGradient><linearGradient id="fold" x1="0" y1="0" x2=".3" y2="1"><stop offset="0" stop-color="#fde4d2"/><stop offset="1" stop-color="#ef9e7e"/></linearGradient><radialGradient id="ffb" cx=".55" cy=".25" r=".7"><stop offset="0" stop-color="#7cc8f2"/><stop offset="1" stop-color="#1b56b0"/></radialGradient><linearGradient id="ffo" x1="0" y1="0" x2="1" y2=".3"><stop offset="0" stop-color="#e2521a"/><stop offset=".6" stop-color="#ee7a1f"/><stop offset="1" stop-color="#f9b731"/></linearGradient><radialGradient id="helpg" cx=".5" cy=".3" r=".8"><stop offset="0" stop-color="#6aa2dc"/><stop offset="1" stop-color="#2f69ad"/></radialGradient></defs></svg>
<div class="a" style="left:0px;top:0px;width:1024px;height:25px;background:linear-gradient(#f0efee,#e9e8e6);border-bottom:1px solid #b8b5b0"></div>
<div class="a" style="left:0px;top:25px;width:1024px;height:26px;background:linear-gradient(#f1f0ef,#eae9e7);border-bottom:1px solid #a5a29d"></div>
<svg style="left:3px;top:3px" width="19" height="18" viewBox="0 0 19 18"><rect x=".5" y=".5" width="18" height="17" rx="2.500" fill="#f4f3f2" stroke="#8f8c88"/><rect x="2.500" y="3" width="14" height="12" fill="#7a2a86"/><rect x="2.500" y="3" width="14" height="3.500" fill="#d9c9b0"/><rect x="2.500" y="6.500" width="14" height="1" fill="#4b1455"/></svg>
<svg style="left:27px;top:4px" width="6" height="17"><path d="M1 0v17M4 0v17" stroke="#b4b1ad" stroke-dasharray="1 1.500"/></svg>
<div class="a tb" style="left:35.0px;top:1px;width:81.5px;height:22px;"></div>
<svg style="left:41.5px;top:3.200px" width="17" height="17" viewBox="0 0 17 17"><g><path d="M.600 1.800h5.600l.800 1.200h6.700v12.200H.600z" fill="#fbfbfb" stroke="#c2c2c2" stroke-width=".8"/><rect x="2.200" y="4.700" width="13.500" height="10.500" fill="url(#fold)" stroke="#ee9f86" stroke-width=".8"/><rect x="3.200" y="5.700" width="4.800" height="8.800" fill="#fff" opacity=".35"/><path d="M8.700 5.200v9.800l2.300-2.200 1.600 3 1.500-.800-1.600-2.900h3z" fill="#eeeeee" stroke="#a6a6a6" stroke-width=".7"/></g></svg>
<span class="t" style="left:65.80px;top:4.00px;font:14px/14px 'Liberation Sans',sans-serif;letter-spacing:0.037px;transform:scaleX(1.0113);color:#111;">[SVP...</span>
<div class="a tb" style="left:120.5px;top:1px;width:81.5px;height:22px;"></div>
<svg style="left:127.0px;top:3.200px" width="17" height="17" viewBox="0 0 17 17"><g><path d="M.600 1.800h5.600l.800 1.200h6.700v12.200H.600z" fill="#fbfbfb" stroke="#c2c2c2" stroke-width=".8"/><rect x="2.200" y="4.700" width="13.500" height="10.500" fill="url(#fold)" stroke="#ee9f86" stroke-width=".8"/><rect x="3.200" y="5.700" width="4.800" height="8.800" fill="#fff" opacity=".35"/><path d="M8.700 5.200v9.800l2.300-2.200 1.600 3 1.500-.800-1.600-2.900h3z" fill="#eeeeee" stroke="#a6a6a6" stroke-width=".7"/></g></svg>
<span class="t" style="left:151.30px;top:4.00px;font:14px/14px 'Liberation Sans',sans-serif;letter-spacing:0.037px;transform:scaleX(1.0113);color:#111;">[SVP...</span>
<div class="a tb" style="left:205.5px;top:1px;width:81.5px;height:22px;"></div>
<svg style="left:212.0px;top:3.200px" width="17" height="17" viewBox="0 0 17 17"><g><circle cx="8.600" cy="7.800" r="6.600" fill="url(#ffb)"/><path d="M2.500 3.300C.500 6 .300 10 2.500 13c2.500 3.500 8.500 3.800 11.500.500 2-2.500 2.200-6 .800-8.500.200 2.500-.800 4.500-2.800 5.500 1-2 .500-3.500-1-4.500.500 1.500-.500 2.500-2 2.500-2 0-2.500 1-2 2s2 1.300 3 .800c-1 1.700-4 1.700-5.200-.300-1-1.700-.800-4 .400-5.500-1.200-.200-2.200-1-2.700-2.200z" fill="url(#ffo)"/></g></svg>
<span class="t" style="left:236.30px;top:4.00px;font:14px/14px 'Liberation Sans',sans-serif;letter-spacing:0.130px;transform:scaleX(1.0449);color:#111;">[Linu...</span>
<div class="a tb" style="left:290.5px;top:1px;width:81.5px;height:22px;"></div>
<svg style="left:297.0px;top:3.200px" width="17" height="17" viewBox="0 0 17 17"><g><rect x="1.500" y="2.500" width="11" height="12" fill="#fbfbfb" stroke="#8d8d8d" stroke-width=".8"/><path d="M3.500 6h7M3.500 8h7M3.500 10h5M3.500 12h6" stroke="#9a9a9a" stroke-width=".7"/><path d="M5 12.500l1-3 7-7 2 2-7 7z" fill="#6a6a6a" stroke="#2a2a2a" stroke-width=".8"/><path d="M6.300 10.200l6.800-6.800" stroke="#b0b0b0" stroke-width=".8"/><path d="M12.200 3.300l2 2 1.300-1.300-2-2z" fill="#e89ab0" stroke="#4a3a1a" stroke-width=".6"/><path d="M5 12.500l1-3 2 2z" fill="#f0d050" stroke="#2a2a2a" stroke-width=".5"/><path d="M5 12.500l.5-1.300.8.800z" fill="#222"/></g></svg>
<span class="t" style="left:321.30px;top:4.00px;font:14px/14px 'Liberation Sans',sans-serif;letter-spacing:0.165px;transform:scaleX(1.0576);color:#111;">svp-l...</span>
<div class="a tb" style="left:375.5px;top:1px;width:81.5px;height:22px;"></div>
<svg style="left:382.0px;top:3.200px" width="17" height="17" viewBox="0 0 17 17"><g><rect x="1.500" y="2.500" width="11" height="12" fill="#fbfbfb" stroke="#8d8d8d" stroke-width=".8"/><path d="M3.500 6h7M3.500 8h7M3.500 10h5M3.500 12h6" stroke="#9a9a9a" stroke-width=".7"/><path d="M5 12.500l1-3 7-7 2 2-7 7z" fill="#6a6a6a" stroke="#2a2a2a" stroke-width=".8"/><path d="M6.300 10.200l6.800-6.800" stroke="#b0b0b0" stroke-width=".8"/><path d="M12.200 3.300l2 2 1.300-1.300-2-2z" fill="#e89ab0" stroke="#4a3a1a" stroke-width=".6"/><path d="M5 12.500l1-3 2 2z" fill="#f0d050" stroke="#2a2a2a" stroke-width=".5"/><path d="M5 12.500l.5-1.300.8.800z" fill="#222"/></g></svg>
<span class="t" style="left:406.30px;top:4.00px;font:14px/14px 'Liberation Sans',sans-serif;letter-spacing:0.223px;transform:scaleX(1.0815);color:#111;">test-...</span>
<div class="a tb" style="left:460.5px;top:1px;width:81.5px;height:22px;"></div>
<svg style="left:467.0px;top:3.200px" width="17" height="17" viewBox="0 0 17 17"><g><path d="M.600 1.800h5.600l.800 1.200h6.700v12.200H.600z" fill="#fbfbfb" stroke="#c2c2c2" stroke-width=".8"/><rect x="2.200" y="4.700" width="13.500" height="10.500" fill="url(#fold)" stroke="#ee9f86" stroke-width=".8"/><rect x="3.200" y="5.700" width="4.800" height="8.800" fill="#fff" opacity=".35"/><path d="M8.700 5.200v9.800l2.300-2.200 1.600 3 1.500-.800-1.600-2.900h3z" fill="#eeeeee" stroke="#a6a6a6" stroke-width=".7"/></g></svg>
<span class="t" style="left:491.30px;top:4.00px;font:14px/14px 'Liberation Sans',sans-serif;letter-spacing:0.037px;transform:scaleX(1.0113);color:#111;">[SVP...</span>
<div class="a tb" style="left:546.0px;top:1px;width:81.5px;height:22px;"></div>
<svg style="left:552.5px;top:3.200px" width="17" height="17" viewBox="0 0 17 17"><g stroke="#222" stroke-width="1" fill="none"><path d="M1.500 3.500h3M3 3.500v8M1.500 11.500h3"/><path d="M6 3l8 9M14 3l-8 9"/><path d="M5.500 14.500h8.500M5.500 13v3M14 13v3"/></g></svg>
<span class="t" style="left:576.80px;top:4.00px;font:14px/14px 'Liberation Sans',sans-serif;letter-spacing:0.223px;transform:scaleX(1.0815);color:#111;">test-...</span>
<div class="a tb" style="left:631.0px;top:1px;width:81.5px;height:22px;"></div>
<svg style="left:637.5px;top:3.200px" width="17" height="17" viewBox="0 0 17 17"><g><rect x="1.500" y="2.500" width="13" height="11" fill="#eeeeec" stroke="#5f6f8f" stroke-width="1"/><rect x="2" y="3" width="12" height="2.500" fill="#3f68b0"/></g></svg>
<span class="t" style="left:661.80px;top:4.00px;font:14px/14px 'Liberation Sans',sans-serif;letter-spacing:0.118px;transform:scaleX(1.0394);color:#111;">Linu...</span>
<div class="a tb" style="left:716.0px;top:1px;width:81.5px;height:22px;"></div>
<svg style="left:722.5px;top:3.200px" width="17" height="17" viewBox="0 0 17 17"><g><rect x="1.500" y="2.500" width="13" height="11" fill="#eeeeec" stroke="#5f6f8f" stroke-width="1"/><rect x="2" y="3" width="12" height="2.500" fill="#3f68b0"/></g></svg>
<span class="t" style="left:746.80px;top:4.00px;font:14px/14px 'Liberation Sans',sans-serif;letter-spacing:-0.064px;transform:scaleX(0.9802);color:#111;">HAL ...</span>
<div class="a tb" style="left:801.0px;top:1px;width:81.5px;height:22px;background:linear-gradient(#cfccc8,#d6d3cf);border-color:#8d8a85;box-shadow:inset 0 1px 2px #b0ada8;"></div>
<svg style="left:807.5px;top:3.200px" width="17" height="17" viewBox="0 0 17 17"><g><rect x=".8" y="3.800" width="15.400" height="11" rx="1.300" fill="url(#camg)" stroke="#777" stroke-width=".8"/><path d="M1.200 5.800V5c0-.6.400-1 1-1h12.600c.6 0 1 .4 1 1v.8z" fill="#8b8b8b"/><path d="M4 3.800l.8-1.600h4.400l.8 1.600z" fill="#b8b8b8" stroke="#777" stroke-width=".7"/><circle cx="8.800" cy="9.700" r="4.600" fill="#ececec" stroke="#8c8c8c" stroke-width=".8"/><circle cx="8.800" cy="9.700" r="3" fill="#bdbdbd" stroke="#9a9a9a" stroke-width=".5"/><rect x="7.300" y="8.900" width="3" height="2.200" rx=".5" fill="#0d1a4a"/><rect x="7.800" y="9.200" width="1.500" height="1" fill="#2f6fd0"/><circle cx="13.700" cy="6.200" r=".9" fill="#111"/></g></svg>
<span class="t" style="left:831.80px;top:4.00px;font:14px/14px 'Liberation Sans',sans-serif;letter-spacing:0.113px;transform:scaleX(1.0349);color:#111;">Take...</span>
<div class="a" style="left:888.5px;top:1.5px;width:108.5px;height:21.5px;background:#aaa5a0;border-radius:3.5px"></div>
<div class="a" style="left:889px;top:1.5px;width:27px;height:21.5px;background:#86a7d6;border:1px solid #fbfcfe;border-radius:3px 0 0 3px"></div>
<div class="a" style="left:890px;top:2.5px;width:23.5px;height:1.5px;background:#4f76b6"></div>
<div class="a" style="left:904.5px;top:4px;width:10.5px;height:7px;background:#c8daf2;border:1px solid #e6eefa"></div>
<div class="a" style="left:911px;top:11px;width:4.5px;height:3px;background:#c8daf2;border:1px solid #e6eefa"></div>
<div class="a" style="left:911px;top:14px;width:4.5px;height:8px;background:#3f66a8;border-left:1px solid #e6eefa"></div>
<div class="a" style="left:942px;top:2px;width:1px;height:20.5px;background:#e9e7e5"></div>
<div class="a" style="left:969px;top:2px;width:1px;height:20.5px;background:#e9e7e5"></div>
<svg style="left:1001px;top:0px" width="22" height="24" viewBox="0 0 22 24"><path d="M2 4.500L4 22h13.500L19.500 4.500z" fill="#dfe2df" stroke="#8d908d" stroke-width=".8"/><path d="M4.500 9l3-2 3 2.500 3.500-2.500 3 2.500-1 4-3 2.500-3.500-1.500-3 2-2-3z" fill="#f8f9f8" stroke="#b9bcb9" stroke-width=".6"/><path d="M5 17l3-1.500 3 2 3.500-2 2 1.500-.500 4H5.500z" fill="#f1f3f1" stroke="#b9bcb9" stroke-width=".6"/><path d="M5 6.500l1.500 15M8 6.500l.700 15.500M11 6.500V22M14 6.500l-.700 15.500M17 6.500L15.500 21.500M3 10.500h16M3.500 15h15M4 19h14" stroke="#8a8d8a" stroke-width=".45" fill="none" opacity=".8"/><ellipse cx="10.800" cy="4" rx="8.800" ry="2.400" fill="#9a9d9a" stroke="#5f625f" stroke-width=".9"/><ellipse cx="10.800" cy="4.200" rx="7" ry="1.400" fill="#6f726f"/><path d="M16 19.500l3-1.500 2 1.500-.500 2.500h-4z" fill="#f4f5f4" stroke="#a9aca9" stroke-width=".6"/></svg>
<svg style="left:8px;top:27px" width="22" height="22" viewBox="8 27 22 22"><circle cx="20" cy="38" r="5.700" fill="none" stroke="#1a1a1a" stroke-width="2.800"/><g fill="#eeedec"><circle cx="11.600" cy="38" r="3.100"/><circle cx="24.200" cy="30.700" r="3.100"/><circle cx="24.200" cy="45.300" r="3.100"/></g><g fill="#1a1a1a"><circle cx="11.400" cy="38" r="1.800"/><circle cx="24.300" cy="30.500" r="1.800"/><circle cx="24.300" cy="45.500" r="1.800"/></g></svg>
<span class="t" style="left:35.50px;top:30.00px;font:14px/14px 'Liberation Sans',sans-serif;letter-spacing:0.117px;transform:scaleX(1.0339);color:#111;">Applications</span>
<span class="t" style="left:130.00px;top:30.00px;font:14px/14px 'Liberation Sans',sans-serif;letter-spacing:-0.060px;transform:scaleX(0.9841);color:#111;">Places</span>
<span class="t" style="left:186.00px;top:30.00px;font:14px/14px 'Liberation Sans',sans-serif;letter-spacing:0.077px;transform:scaleX(1.0182);color:#111;">System</span>
<svg style="left:243px;top:26px" width="24" height="24" viewBox="0 0 24 24"><path d="M11 .8c-2.600 0-4 2-4 4.600 0 1.800-1 3-2.200 5C3.500 12.500 2.500 15 3 17.500c.4 2 2 3.500 4.500 3.500h8c2.700 0 4.500-1.800 4.700-4 .3-3-1.200-5.800-2.800-8-1-1.400-1.400-2.400-1.500-4C15.800 2.500 14 .8 11 .8z" fill="#3d3d3d"/><path d="M14 3c2 1 2.200 3.500 2.400 5.500 1.300 2 2.600 4.500 2.400 7.500-.8-2-2-4-3.500-5.500z" fill="#9a9a9a"/><path d="M11 8.500c-1.800 1-3.300 4-3.300 7.500 0 2.500 1.300 4.500 3.300 4.500h1.500c2 0 3.200-2 3.200-4.500 0-3.500-1.200-6.500-2.700-7.500z" fill="#f6f6f6"/><path d="M12.500 9c1.300 1.500 2 4 2 7 0 2-.6 3.600-1.800 4.300 1.800-.3 3-2 3-4.300 0-3.200-1.200-6-3.200-7z" fill="#c9c9c9"/><circle cx="9.300" cy="4.600" r="1.100" fill="#fff"/><circle cx="12.300" cy="4.600" r="1.200" fill="#fff"/><circle cx="9.500" cy="4.800" r=".5" fill="#111"/><circle cx="12" cy="4.800" r=".5" fill="#111"/><path d="M7.500 6.500c1-.9 2.200-1.300 3.300-1.300s2.200.5 3 1.300c-.8 1-1.900 1.600-3.100 1.600S8.300 7.500 7.500 6.500z" fill="#f5b81c"/><path d="M1 21.500c-.3-1.800 1-3.600 3-4.300 1.800-.6 3.500.3 4.200 2 .5 1.300.3 2.800-.6 3.600-1.800.6-5 .3-6.600-1.300z" fill="#f7c21f"/><path d="M22.500 21c.3-1.800-.8-3.500-2.600-4.200-1.800-.7-3.600 0-4.400 1.600-.7 1.400-.5 3 .5 4 2 .6 5 .2 6.500-1.400z" fill="#f7c21f"/></svg>
<svg style="left:266.500px;top:25.500px" width="23.500" height="24" viewBox="0.300 0.700 15.500 15.600"><g><circle cx="8.600" cy="7.800" r="6.600" fill="url(#ffb)"/><path d="M2.500 3.300C.500 6 .300 10 2.500 13c2.500 3.500 8.500 3.800 11.500.500 2-2.500 2.200-6 .800-8.500.200 2.500-.800 4.500-2.800 5.500 1-2 .500-3.500-1-4.500.500 1.500-.500 2.500-2 2.500-2 0-2.500 1-2 2s2 1.300 3 .800c-1 1.700-4 1.700-5.200-.300-1-1.700-.800-4 .400-5.500-1.200-.200-2.200-1-2.700-2.200z" fill="url(#ffo)"/></g></svg>
<svg style="left:290.500px;top:26.500px" width="23" height="23" viewBox="0 0 23 23"><circle cx="11.500" cy="11.500" r="10.600" fill="url(#helpg)" stroke="#2b5f9e" stroke-width=".9"/><path d="M8 8.300c0-2 1.400-3.300 3.500-3.300s3.500 1.200 3.500 3c0 2.500-3 2.600-3 5.200" fill="none" stroke="#fff" stroke-width="2.200" stroke-linecap="round"/><circle cx="12" cy="16.800" r="1.400" fill="#fff"/></svg>
<svg style="left:314.5px;top:27px" width="22.500" height="21" viewBox="0 1.500 17 14"><g><rect x=".8" y="3.800" width="15.400" height="11" rx="1.300" fill="url(#camg)" stroke="#777" stroke-width=".8"/><path d="M1.200 5.800V5c0-.6.400-1 1-1h12.600c.6 0 1 .4 1 1v.8z" fill="#8b8b8b"/><path d="M4 3.800l.8-1.600h4.400l.8 1.600z" fill="#b8b8b8" stroke="#777" stroke-width=".7"/><circle cx="8.800" cy="9.700" r="4.600" fill="#ececec" stroke="#8c8c8c" stroke-width=".8"/><circle cx="8.800" cy="9.700" r="3" fill="#bdbdbd" stroke="#9a9a9a" stroke-width=".5"/><rect x="7.300" y="8.900" width="3" height="2.200" rx=".5" fill="#0d1a4a"/><rect x="7.800" y="9.200" width="1.500" height="1" fill="#2f6fd0"/><circle cx="13.700" cy="6.200" r=".9" fill="#111"/></g></svg>
<svg style="left:338.55px;top:27px" width="22.500" height="21" viewBox="0 1.500 17 14"><g><rect x=".8" y="3.800" width="15.400" height="11" rx="1.300" fill="url(#camg)" stroke="#777" stroke-width=".8"/><path d="M1.200 5.800V5c0-.6.400-1 1-1h12.600c.6 0 1 .4 1 1v.8z" fill="#8b8b8b"/><path d="M4 3.800l.8-1.600h4.400l.8 1.600z" fill="#b8b8b8" stroke="#777" stroke-width=".7"/><circle cx="8.800" cy="9.700" r="4.600" fill="#ececec" stroke="#8c8c8c" stroke-width=".8"/><circle cx="8.800" cy="9.700" r="3" fill="#bdbdbd" stroke="#9a9a9a" stroke-width=".5"/><rect x="7.300" y="8.900" width="3" height="2.200" rx=".5" fill="#0d1a4a"/><rect x="7.800" y="9.200" width="1.500" height="1" fill="#2f6fd0"/><circle cx="13.700" cy="6.200" r=".9" fill="#111"/></g></svg>
<svg style="left:362.6px;top:27px" width="22.500" height="21" viewBox="0 1.500 17 14"><g><rect x=".8" y="3.800" width="15.400" height="11" rx="1.300" fill="url(#camg)" stroke="#777" stroke-width=".8"/><path d="M1.200 5.800V5c0-.6.400-1 1-1h12.600c.6 0 1 .4 1 1v.8z" fill="#8b8b8b"/><path d="M4 3.800l.8-1.600h4.400l.8 1.600z" fill="#b8b8b8" stroke="#777" stroke-width=".7"/><circle cx="8.800" cy="9.700" r="4.600" fill="#ececec" stroke="#8c8c8c" stroke-width=".8"/><circle cx="8.800" cy="9.700" r="3" fill="#bdbdbd" stroke="#9a9a9a" stroke-width=".5"/><rect x="7.300" y="8.900" width="3" height="2.200" rx=".5" fill="#0d1a4a"/><rect x="7.800" y="9.200" width="1.500" height="1" fill="#2f6fd0"/><circle cx="13.700" cy="6.200" r=".9" fill="#111"/></g></svg>
<svg style="left:386.65px;top:27px" width="22.500" height="21" viewBox="0 1.500 17 14"><g><rect x=".8" y="3.800" width="15.400" height="11" rx="1.300" fill="url(#camg)" stroke="#777" stroke-width=".8"/><path d="M1.200 5.800V5c0-.6.400-1 1-1h12.600c.6 0 1 .4 1 1v.8z" fill="#8b8b8b"/><path d="M4 3.800l.8-1.600h4.400l.8 1.600z" fill="#b8b8b8" stroke="#777" stroke-width=".7"/><circle cx="8.800" cy="9.700" r="4.600" fill="#ececec" stroke="#8c8c8c" stroke-width=".8"/><circle cx="8.800" cy="9.700" r="3" fill="#bdbdbd" stroke="#9a9a9a" stroke-width=".5"/><rect x="7.300" y="8.900" width="3" height="2.200" rx=".5" fill="#0d1a4a"/><rect x="7.800" y="9.200" width="1.500" height="1" fill="#2f6fd0"/><circle cx="13.700" cy="6.200" r=".9" fill="#111"/></g></svg>
<svg style="left:645px;top:29px" width="6" height="18"><path d="M1 0v18M4 0v18" stroke="#b4b1ad" stroke-dasharray="1 1.500"/></svg>
<svg style="left:654px;top:28px" width="22" height="19" viewBox="0 0 22 19"><path d="M11 1.800L20.500 17.500H1.500z" fill="#f3f2f1" stroke="#ee1c1c" stroke-width="1.500" stroke-linejoin="round"/><path d="M11 6.500v6" stroke="#e11d1d" stroke-width="1.600"/><circle cx="11" cy="14.800" r="1" fill="#e11d1d"/></svg>
<svg style="left:680px;top:29px" width="20" height="18" viewBox="0 0 20 18"><g fill="none" stroke="#a5a29e" stroke-width="1.900" stroke-linecap="round"><path d="M1.800 6.500a10.500 10.500 0 0 1 14.800 0"/><path d="M4.300 9.800a7 7 0 0 1 9.800 0"/><path d="M6.800 12.800a3.500 3.500 0 0 1 4.800 0"/></g><circle cx="9.200" cy="15.300" r="1.300" fill="#a5a29e"/><path d="M14.300 7.500v6" stroke="#d40000" stroke-width="2"/><rect x="13.300" y="14.800" width="2" height="1.800" fill="#d40000"/></svg>
<svg style="left:709px;top:31px" width="22" height="14" viewBox="0 0 22 14"><path d="M1.200 4.800h2.300l3.700-3.500v11.400L3.500 9.200H1.200z" fill="none" stroke="#222" stroke-width="1.400" stroke-linejoin="round"/><path d="M9.500 7h2.600M13.500 7h2.600M17.500 7h2.600" stroke="#222" stroke-width="1.400"/></svg>
<svg style="left:747px;top:32px" width="18" height="12" viewBox="0 0 18 12"><rect x=".6" y=".6" width="16.800" height="10.800" rx="1" fill="#2d2d2d"/><path d="M1.500 1.500L9 7l7.500-5.500" fill="none" stroke="#f0f0f0" stroke-width="1.100"/><path d="M1.500 10.500l5-4.500M16.500 10.500l-5-4.500" stroke="#f0f0f0" stroke-width=".9"/></svg>
<span class="t" style="left:778.00px;top:30.00px;font:14px/14px 'Liberation Sans',sans-serif;letter-spacing:0.008px;transform:scaleX(1.0021);color:#111;">Sun Mar 12, 11:30 PM</span>
<svg style="left:935px;top:29px" width="20" height="18" viewBox="0 0 20 18"><path d="M9 1a7.500 7.500 0 1 0 3.500 14.200L18.500 17l-2.700-3.700A7.500 7.500 0 0 0 9 1z" fill="#2b2b2b"/><path d="M6.200 5.700l5.600 5.600M11.800 5.700l-5.600 5.600" stroke="#f4f4f4" stroke-width="1.900"/></svg>
<span class="t" style="left:958.00px;top:30.00px;font:14px/14px 'Liberation Sans',sans-serif;letter-spacing:0.083px;transform:scaleX(1.0210);color:#111;">svp</span>
<svg style="left:998px;top:29px" width="17" height="17" viewBox="0 0 17 17"><path d="M5.200 3.800a6 6 0 1 0 6.600 0" fill="none" stroke="#2b2b2b" stroke-width="1.700" stroke-linecap="round"/><path d="M8.500 1v7" stroke="#2b2b2b" stroke-width="1.700" stroke-linecap="round"/></svg>
<svg style="left:921px;top:367px" width="16" height="24" viewBox="0 0 16 24"><path d="M2.500 2.300V20.300L6.400 16.600L9 22.300L11.600 21.200L9 15.600L13.500 14z" fill="#fbfbfb" fill-opacity=".93" stroke="#0a0a0a" stroke-width="1.400" stroke-linejoin="round"/></svg>
</body></html>
